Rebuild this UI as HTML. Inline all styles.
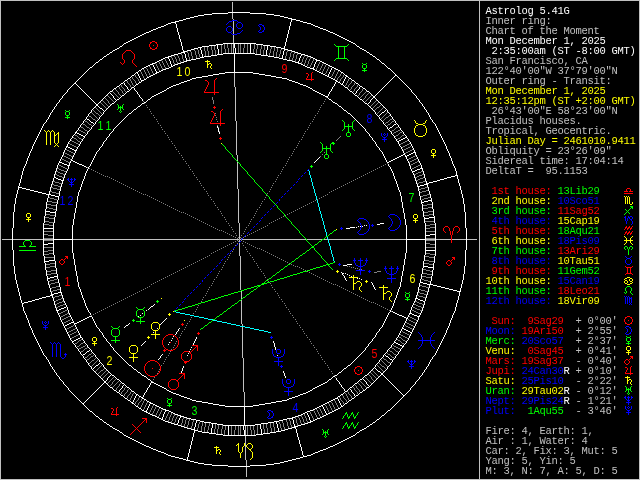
<!DOCTYPE html>
<html lang="en"><head><meta charset="utf-8"><title>Astrolog 5.41G</title>
<style>
html,body{margin:0;padding:0;background:#000;overflow:hidden}
svg{display:block;position:absolute;left:0;top:0}
.sb{font-family:"Liberation Mono","DejaVu Sans Mono",monospace;font-size:10.5px;letter-spacing:-0.3px;white-space:pre}
.hn{font-family:"Liberation Sans","DejaVu Sans",sans-serif;font-size:12.5px;text-anchor:middle;}
</style></head>
<body>
<svg width="640" height="480" viewBox="0 0 640 480" shape-rendering="crispEdges">
<defs><filter id="aa" x="0" y="0" width="100%" height="100%" color-interpolation-filters="sRGB"><feComponentTransfer><feFuncA type="linear" slope="1"/></feComponentTransfer></filter></defs>
<rect width="640" height="480" fill="#000"/>
<path id="border" fill="#c0c0c0" d="M0 0h640v1h-640zM0 1h1v478h-1zM479 1h1v478h-1zM639 1h1v478h-1zM0 479h640v1h-640z"/>
<path id="axis-h" fill="#c0c0c0" d="M2 239h475v1h-475z"/>
<path id="axis-v" fill="#c0c0c0" d="M232 2h1v17h-1zM233 19h1v34h-1zM234 53h1v34h-1zM235 87h1v34h-1zM236 121h1v34h-1zM237 155h1v34h-1zM238 189h1v34h-1zM239 223h1v33h-1zM240 256h1v34h-1zM241 290h1v34h-1zM242 324h1v34h-1zM243 358h1v34h-1zM244 392h1v34h-1zM245 426h1v34h-1zM246 460h1v17h-1z"/>
<path id="ticks1" fill="#808080" d="M224 44h1v5h-1zM227 44h1v4h-1zM231 44h1v9h-1zM238 44h1v9h-1zM240 44h1v9h-1zM244 44h1v4h-1zM247 44h1v9h-1zM254 44h1v5h-1zM214 45h1v5h-1zM221 45h1v9h-1zM257 45h1v4h-1zM261 45h1v4h-1zM264 45h1v5h-1zM207 46h1v5h-1zM211 46h1v4h-1zM271 46h1v3h-1zM204 47h1v4h-1zM274 47h1v4h-1zM197 48h1v2h-1zM228 48h1v5h-1zM243 48h1v5h-1zM277 48h1v4h-1zM281 48h1v2h-1zM194 49h1v2h-1zM225 49h1v5h-1zM253 49h1v5h-1zM256 49h1v5h-1zM260 49h1v5h-1zM270 49h1v4h-1zM190 50h1v2h-1zM198 50h1v4h-1zM212 50h1v5h-1zM215 50h1v5h-1zM263 50h1v5h-1zM280 50h1v4h-1zM287 50h1v2h-1zM187 51h1v2h-1zM195 51h1v4h-1zM205 51h1v5h-1zM208 51h1v5h-1zM273 51h1v5h-1zM291 51h1v2h-1zM191 52h1v4h-1zM276 52h1v5h-1zM286 52h1v4h-1zM294 52h1v2h-1zM181 53h1v2h-1zM188 53h1v4h-1zM269 53h1v3h-1zM290 53h1v4h-1zM297 53h1v2h-1zM177 54h1v2h-1zM199 54h1v3h-1zM279 54h1v3h-1zM293 54h1v4h-1zM174 55h1v2h-1zM182 55h1v4h-1zM196 55h1v3h-1zM296 55h1v4h-1zM304 55h1v2h-1zM171 56h1v2h-1zM178 56h1v2h-1zM192 56h1v3h-1zM285 56h1v3h-1zM307 56h1v2h-1zM175 57h1v2h-1zM189 57h1v3h-1zM289 57h1v3h-1zM303 57h1v2h-1zM310 57h1v2h-1zM172 58h1v2h-1zM179 58h1v3h-1zM292 58h1v3h-1zM306 58h1v2h-1zM165 59h1v2h-1zM176 59h1v3h-1zM183 59h1v3h-1zM295 59h1v3h-1zM302 59h1v3h-1zM309 59h1v2h-1zM313 59h1v2h-1zM161 60h1v1h-1zM173 60h1v3h-1zM305 60h1v3h-1zM158 61h1v1h-1zM162 61h1v2h-1zM166 61h1v2h-1zM180 61h1v2h-1zM308 61h1v3h-1zM312 61h1v2h-1zM320 61h1v1h-1zM159 62h1v2h-1zM177 62h1v2h-1zM301 62h1v2h-1zM319 62h1v2h-1zM155 63h1v1h-1zM163 63h1v2h-1zM167 63h1v2h-1zM174 63h1v2h-1zM304 63h1v2h-1zM311 63h1v2h-1zM323 63h1v1h-1zM156 64h1v2h-1zM160 64h1v2h-1zM307 64h1v2h-1zM318 64h1v2h-1zM322 64h1v2h-1zM326 64h1v1h-1zM164 65h1v2h-1zM168 65h1v2h-1zM310 65h1v2h-1zM325 65h1v2h-1zM149 66h1v1h-1zM157 66h1v2h-1zM161 66h1v2h-1zM317 66h1v2h-1zM321 66h1v2h-1zM329 66h1v1h-1zM150 67h1v2h-1zM165 67h1v2h-1zM324 67h1v2h-1zM328 67h1v2h-1zM146 68h1v1h-1zM158 68h1v2h-1zM162 68h1v2h-1zM316 68h1v2h-1zM320 68h1v2h-1zM143 69h1v1h-1zM147 69h1v2h-1zM151 69h1v2h-1zM323 69h1v2h-1zM327 69h1v2h-1zM335 69h1v1h-1zM144 70h1v2h-1zM159 70h1v1h-1zM319 70h1v1h-1zM334 70h1v2h-1zM140 71h1v1h-1zM148 71h1v2h-1zM152 71h1v2h-1zM322 71h1v2h-1zM326 71h1v2h-1zM338 71h1v1h-1zM141 72h1v2h-1zM145 72h1v2h-1zM333 72h1v2h-1zM337 72h1v2h-1zM149 73h1v2h-1zM153 73h1v1h-1zM325 73h1v1h-1zM341 73h1v1h-1zM134 74h1v1h-1zM142 74h1v2h-1zM146 74h1v2h-1zM332 74h1v2h-1zM336 74h1v2h-1zM340 74h1v2h-1zM344 74h1v1h-1zM135 75h1v2h-1zM150 75h1v1h-1zM343 75h1v2h-1zM131 76h1v1h-1zM143 76h1v2h-1zM147 76h1v1h-1zM331 76h1v1h-1zM335 76h1v2h-1zM339 76h1v1h-1zM132 77h1v2h-1zM136 77h1v1h-1zM338 77h1v1h-1zM342 77h1v1h-1zM129 78h1v1h-1zM137 78h1v1h-1zM144 78h1v1h-1zM334 78h1v1h-1zM337 78h1v2h-1zM341 78h1v1h-1zM349 78h1v1h-1zM130 79h1v2h-1zM133 79h1v1h-1zM138 79h1v2h-1zM340 79h1v2h-1zM348 79h1v2h-1zM126 80h1v1h-1zM134 80h1v1h-1zM336 80h1v1h-1zM352 80h1v1h-1zM127 81h1v2h-1zM131 81h1v2h-1zM135 81h1v2h-1zM139 81h1v1h-1zM339 81h1v1h-1zM347 81h1v2h-1zM351 81h1v2h-1zM355 82h1v1h-1zM128 83h1v1h-1zM132 83h1v2h-1zM136 83h1v1h-1zM346 83h1v2h-1zM350 83h1v1h-1zM354 83h1v2h-1zM120 84h1v1h-1zM129 84h1v1h-1zM349 84h1v1h-1zM358 84h1v1h-1zM121 85h1v2h-1zM130 85h1v2h-1zM133 85h1v1h-1zM345 85h1v1h-1zM348 85h1v2h-1zM353 85h1v1h-1zM357 85h1v2h-1zM118 86h1v1h-1zM352 86h1v1h-1zM119 87h1v2h-1zM122 87h1v1h-1zM131 87h1v1h-1zM347 87h1v1h-1zM351 87h1v2h-1zM356 87h1v1h-1zM123 88h1v1h-1zM355 88h1v1h-1zM363 88h1v1h-1zM115 89h1v1h-1zM120 89h1v1h-1zM124 89h1v2h-1zM350 89h1v1h-1zM354 89h1v2h-1zM362 89h1v2h-1zM116 90h1v1h-1zM121 90h1v1h-1zM112 91h1v1h-1zM117 91h1v1h-1zM122 91h1v2h-1zM125 91h1v1h-1zM353 91h1v1h-1zM361 91h1v1h-1zM366 91h1v1h-1zM113 92h1v1h-1zM118 92h1v2h-1zM360 92h1v1h-1zM365 92h1v1h-1zM114 93h1v1h-1zM123 93h1v1h-1zM359 93h1v2h-1zM364 93h1v1h-1zM368 93h1v1h-1zM115 94h1v1h-1zM119 94h1v1h-1zM363 94h1v1h-1zM367 94h1v1h-1zM107 95h1v1h-1zM116 95h1v1h-1zM120 95h1v1h-1zM358 95h1v1h-1zM362 95h1v1h-1zM366 95h1v1h-1zM371 95h1v1h-1zM108 96h1v1h-1zM117 96h1v1h-1zM361 96h1v1h-1zM365 96h1v2h-1zM370 96h1v1h-1zM109 97h1v1h-1zM118 97h1v1h-1zM360 97h1v1h-1zM369 97h1v1h-1zM105 98h1v1h-1zM110 98h1v1h-1zM364 98h1v1h-1zM368 98h1v1h-1zM106 99h1v1h-1zM111 99h1v1h-1zM363 99h1v1h-1zM367 99h1v1h-1zM102 100h1v1h-1zM107 100h1v1h-1zM112 100h1v1h-1zM366 100h1v1h-1zM376 100h1v1h-1zM103 101h1v1h-1zM108 101h1v2h-1zM113 101h1v1h-1zM365 101h1v1h-1zM375 101h1v1h-1zM100 102h1v1h-1zM104 102h1v1h-1zM374 102h1v1h-1zM378 102h1v1h-1zM101 103h1v1h-1zM105 103h1v1h-1zM109 103h1v1h-1zM373 103h1v1h-1zM377 103h1v1h-1zM102 104h1v1h-1zM106 104h1v1h-1zM110 104h1v1h-1zM372 104h1v1h-1zM376 104h1v1h-1zM103 105h1v1h-1zM107 105h1v1h-1zM371 105h1v1h-1zM375 105h1v1h-1zM380 105h1v1h-1zM104 106h1v1h-1zM108 106h1v1h-1zM370 106h1v1h-1zM374 106h1v1h-1zM379 106h1v1h-1zM95 107h1v1h-1zM105 107h1v1h-1zM373 107h1v1h-1zM377 107h2v1h-2zM383 107h1v1h-1zM96 108h1v1h-1zM106 108h1v1h-1zM372 108h1v1h-1zM376 108h1v1h-1zM382 108h1v1h-1zM97 109h1v1h-1zM375 109h1v1h-1zM381 109h1v1h-1zM93 110h1v1h-1zM98 110h1v1h-1zM374 110h1v1h-1zM380 110h1v1h-1zM94 111h1v1h-1zM99 111h1v1h-1zM379 111h1v1h-1zM91 112h1v1h-1zM95 112h1v1h-1zM100 112h1v1h-1zM378 112h1v1h-1zM387 112h1v1h-1zM92 113h1v1h-1zM96 113h2v1h-2zM101 113h1v1h-1zM377 113h1v1h-1zM386 113h1v1h-1zM93 114h1v1h-1zM98 114h1v1h-1zM385 114h1v1h-1zM88 115h1v1h-1zM94 115h1v1h-1zM99 115h1v1h-1zM384 115h1v1h-1zM389 115h1v1h-1zM89 116h2v1h-2zM95 116h1v1h-1zM383 116h1v1h-1zM388 116h1v1h-1zM91 117h1v1h-1zM96 117h1v1h-1zM382 117h1v1h-1zM386 117h2v1h-2zM92 118h1v1h-1zM97 118h1v1h-1zM381 118h1v1h-1zM385 118h1v1h-1zM392 118h1v1h-1zM93 119h2v1h-2zM384 119h1v1h-1zM390 119h2v1h-2zM84 120h1v1h-1zM95 120h1v1h-1zM383 120h1v1h-1zM389 120h1v1h-1zM394 120h1v1h-1zM85 121h2v1h-2zM388 121h1v1h-1zM392 121h2v1h-2zM87 122h1v1h-1zM386 122h2v1h-2zM391 122h1v1h-1zM82 123h1v1h-1zM88 123h1v1h-1zM385 123h1v1h-1zM390 123h1v1h-1zM83 124h2v1h-2zM89 124h2v1h-2zM388 124h2v1h-2zM85 125h1v1h-1zM91 125h1v1h-1zM387 125h1v1h-1zM80 126h1v1h-1zM86 126h1v1h-1zM398 126h1v1h-1zM81 127h2v1h-2zM87 127h2v1h-2zM396 127h2v1h-2zM83 128h1v1h-1zM89 128h1v1h-1zM395 128h1v1h-1zM78 129h1v1h-1zM84 129h1v1h-1zM394 129h1v1h-1zM400 129h1v1h-1zM79 130h2v1h-2zM85 130h2v1h-2zM392 130h2v1h-2zM398 130h2v1h-2zM81 131h2v1h-2zM87 131h1v1h-1zM391 131h1v1h-1zM396 131h2v1h-2zM402 131h1v1h-1zM83 132h2v1h-2zM394 132h2v1h-2zM400 132h2v1h-2zM85 133h1v1h-1zM393 133h1v1h-1zM399 133h1v1h-1zM74 134h1v1h-1zM398 134h1v1h-1zM404 134h1v1h-1zM75 135h2v1h-2zM396 135h2v1h-2zM402 135h2v1h-2zM77 136h1v1h-1zM395 136h1v1h-1zM401 136h1v1h-1zM73 137h1v1h-1zM78 137h1v1h-1zM400 137h1v1h-1zM74 138h2v1h-2zM79 138h2v1h-2zM398 138h2v1h-2zM76 139h1v1h-1zM81 139h1v1h-1zM397 139h1v1h-1zM71 140h1v1h-1zM77 140h1v1h-1zM407 140h1v1h-1zM72 141h2v1h-2zM78 141h2v1h-2zM405 141h2v1h-2zM74 142h2v1h-2zM80 142h1v1h-1zM403 142h2v1h-2zM69 143h1v1h-1zM76 143h2v1h-2zM401 143h2v1h-2zM409 143h1v1h-1zM70 144h2v1h-2zM78 144h1v1h-1zM400 144h1v1h-1zM407 144h2v1h-2zM72 145h2v1h-2zM405 145h2v1h-2zM74 146h2v1h-2zM403 146h2v1h-2zM410 146h1v1h-1zM76 147h1v1h-1zM402 147h1v1h-1zM408 147h2v1h-2zM406 148h2v1h-2zM66 149h1v1h-1zM404 149h2v1h-2zM412 149h1v1h-1zM67 150h2v1h-2zM403 150h1v1h-1zM410 150h2v1h-2zM69 151h2v1h-2zM408 151h2v1h-2zM64 152h1v1h-1zM71 152h2v1h-2zM406 152h2v1h-2zM65 153h2v1h-2zM73 153h1v1h-1zM405 153h1v1h-1zM67 154h2v1h-2zM63 155h1v1h-1zM69 155h2v1h-2zM415 155h1v1h-1zM64 156h2v1h-2zM71 156h2v1h-2zM413 156h2v1h-2zM66 157h2v1h-2zM411 157h2v1h-2zM61 158h1v1h-1zM68 158h2v1h-2zM409 158h2v1h-2zM416 158h2v1h-2zM62 159h2v1h-2zM70 159h1v1h-1zM408 159h1v1h-1zM414 159h2v1h-2zM64 160h2v1h-2zM412 160h2v1h-2zM66 161h2v1h-2zM410 161h2v1h-2zM417 161h2v1h-2zM68 162h2v1h-2zM409 162h1v1h-1zM415 162h2v1h-2zM413 163h2v1h-2zM411 164h2v1h-2zM59 165h2v1h-2zM410 165h1v1h-1zM418 165h2v1h-2zM61 166h2v1h-2zM416 166h2v1h-2zM63 167h2v1h-2zM414 167h2v1h-2zM57 168h2v1h-2zM65 168h2v1h-2zM412 168h2v1h-2zM59 169h2v1h-2zM61 170h3v1h-3zM56 171h2v1h-2zM64 171h2v1h-2zM421 171h2v1h-2zM58 172h2v1h-2zM418 172h3v1h-3zM60 173h3v1h-3zM416 173h2v1h-2zM55 174h2v1h-2zM63 174h2v1h-2zM414 174h2v1h-2zM422 174h2v1h-2zM57 175h2v1h-2zM419 175h3v1h-3zM59 176h3v1h-3zM417 176h2v1h-2zM62 177h2v1h-2zM415 177h2v1h-2zM423 177h2v1h-2zM420 178h3v1h-3zM418 179h2v1h-2zM416 180h2v1h-2zM53 181h2v1h-2zM423 181h3v1h-3zM55 182h4v1h-4zM419 182h4v1h-4zM59 183h3v1h-3zM417 183h2v1h-2zM52 184h2v1h-2zM54 185h4v1h-4zM58 186h3v1h-3zM51 187h2v1h-2zM425 187h3v1h-3zM53 188h4v1h-4zM421 188h4v1h-4zM57 189h3v1h-3zM419 189h2v1h-2zM426 190h3v1h-3zM50 191h2v1h-2zM422 191h4v1h-4zM52 192h4v1h-4zM420 192h2v1h-2zM56 193h3v1h-3zM427 194h3v1h-3zM423 195h4v1h-4zM421 196h2v1h-2zM48 197h2v1h-2zM428 197h3v1h-3zM50 198h4v1h-4zM424 198h4v1h-4zM54 199h3v1h-3zM422 199h2v1h-2zM48 201h4v1h-4zM52 202h5v1h-5zM47 204h4v1h-4zM427 204h5v1h-5zM51 205h5v1h-5zM423 205h4v1h-4zM46 207h3v1h-3zM428 207h5v1h-5zM49 208h4v1h-4zM423 208h5v1h-5zM53 209h3v1h-3zM428 211h5v1h-5zM424 212h4v1h-4zM45 214h5v1h-5zM429 214h5v1h-5zM50 215h5v1h-5zM424 215h5v1h-5zM45 217h4v1h-4zM49 218h5v1h-5zM45 221h4v1h-4zM425 221h9v1h-9zM49 222h5v1h-5zM44 224h5v1h-5zM430 224h5v1h-5zM49 225h5v1h-5zM425 225h5v1h-5zM430 227h5v1h-5zM426 228h4v1h-4zM44 231h9v1h-9zM426 231h9v1h-9zM44 234h4v1h-4zM48 235h5v1h-5zM44 238h9v1h-9zM426 238h9v1h-9zM44 240h9v1h-9zM426 240h9v1h-9zM426 243h4v1h-4zM430 244h5v1h-5zM44 247h9v1h-9zM426 247h9v1h-9zM48 250h5v1h-5zM44 251h4v1h-4zM49 253h5v1h-5zM425 253h5v1h-5zM44 254h5v1h-5zM430 254h5v1h-5zM425 256h4v1h-4zM45 257h9v1h-9zM429 257h5v1h-5zM425 260h4v1h-4zM429 261h5v1h-5zM50 263h5v1h-5zM424 263h5v1h-5zM45 264h5v1h-5zM429 264h5v1h-5zM50 266h5v1h-5zM46 267h4v1h-4zM423 269h3v1h-3zM51 270h5v1h-5zM426 270h4v1h-4zM46 271h5v1h-5zM430 271h3v1h-3zM51 273h5v1h-5zM423 273h4v1h-4zM47 274h4v1h-4zM427 274h5v1h-5zM422 276h4v1h-4zM426 277h5v1h-5zM54 279h3v1h-3zM422 279h2v1h-2zM50 280h4v1h-4zM424 280h4v1h-4zM48 281h2v1h-2zM428 281h3v1h-3zM55 282h3v1h-3zM51 283h4v1h-4zM49 284h2v1h-2zM420 285h2v1h-2zM56 286h3v1h-3zM422 286h4v1h-4zM52 287h4v1h-4zM426 287h3v1h-3zM50 288h2v1h-2zM57 289h3v1h-3zM419 289h2v1h-2zM53 290h4v1h-4zM421 290h4v1h-4zM51 291h2v1h-2zM425 291h3v1h-3zM418 292h2v1h-2zM420 293h4v1h-4zM424 294h3v1h-3zM59 295h3v1h-3zM417 295h2v1h-2zM55 296h4v1h-4zM419 296h4v1h-4zM53 297h2v1h-2zM423 297h3v1h-3zM61 298h2v1h-2zM58 299h3v1h-3zM56 300h2v1h-2zM54 301h2v1h-2zM62 301h2v1h-2zM415 301h2v1h-2zM59 302h3v1h-3zM417 302h2v1h-2zM57 303h2v1h-2zM419 303h3v1h-3zM55 304h2v1h-2zM63 304h2v1h-2zM414 304h2v1h-2zM422 304h2v1h-2zM60 305h3v1h-3zM416 305h2v1h-2zM58 306h2v1h-2zM418 306h3v1h-3zM56 307h2v1h-2zM413 307h2v1h-2zM421 307h2v1h-2zM415 308h2v1h-2zM417 309h3v1h-3zM65 310h2v1h-2zM412 310h2v1h-2zM420 310h2v1h-2zM63 311h2v1h-2zM414 311h2v1h-2zM61 312h2v1h-2zM416 312h2v1h-2zM59 313h2v1h-2zM67 313h2v1h-2zM418 313h2v1h-2zM65 314h2v1h-2zM63 315h2v1h-2zM61 316h2v1h-2zM68 316h2v1h-2zM409 316h1v1h-1zM60 317h1v1h-1zM66 317h2v1h-2zM410 317h2v1h-2zM64 318h2v1h-2zM412 318h2v1h-2zM62 319h2v1h-2zM70 319h1v1h-1zM408 319h1v1h-1zM414 319h2v1h-2zM61 320h1v1h-1zM68 320h2v1h-2zM409 320h2v1h-2zM416 320h2v1h-2zM66 321h2v1h-2zM411 321h2v1h-2zM64 322h2v1h-2zM406 322h1v1h-1zM413 322h2v1h-2zM63 323h1v1h-1zM407 323h2v1h-2zM415 323h1v1h-1zM409 324h2v1h-2zM73 325h1v1h-1zM405 325h1v1h-1zM411 325h2v1h-2zM71 326h2v1h-2zM406 326h2v1h-2zM413 326h2v1h-2zM69 327h2v1h-2zM408 327h2v1h-2zM67 328h2v1h-2zM75 328h1v1h-1zM410 328h2v1h-2zM66 329h1v1h-1zM73 329h2v1h-2zM412 329h1v1h-1zM71 330h2v1h-2zM69 331h2v1h-2zM76 331h1v1h-1zM402 331h1v1h-1zM68 332h1v1h-1zM74 332h2v1h-2zM403 332h2v1h-2zM72 333h2v1h-2zM405 333h2v1h-2zM70 334h2v1h-2zM78 334h1v1h-1zM400 334h1v1h-1zM407 334h2v1h-2zM69 335h1v1h-1zM76 335h2v1h-2zM401 335h2v1h-2zM409 335h1v1h-1zM74 336h2v1h-2zM398 336h1v1h-1zM403 336h2v1h-2zM72 337h2v1h-2zM399 337h2v1h-2zM405 337h2v1h-2zM71 338h1v1h-1zM401 338h1v1h-1zM407 338h1v1h-1zM81 339h1v1h-1zM397 339h1v1h-1zM402 339h1v1h-1zM79 340h2v1h-2zM398 340h2v1h-2zM403 340h2v1h-2zM78 341h1v1h-1zM400 341h1v1h-1zM405 341h1v1h-1zM77 342h1v1h-1zM83 342h1v1h-1zM401 342h1v1h-1zM75 343h2v1h-2zM81 343h2v1h-2zM402 343h2v1h-2zM74 344h1v1h-1zM80 344h1v1h-1zM404 344h1v1h-1zM79 345h1v1h-1zM85 345h1v1h-1zM393 345h1v1h-1zM77 346h2v1h-2zM83 346h2v1h-2zM394 346h2v1h-2zM76 347h1v1h-1zM81 347h2v1h-2zM87 347h1v1h-1zM391 347h1v1h-1zM396 347h2v1h-2zM79 348h2v1h-2zM85 348h2v1h-2zM392 348h2v1h-2zM398 348h2v1h-2zM78 349h1v1h-1zM84 349h1v1h-1zM394 349h1v1h-1zM400 349h1v1h-1zM83 350h1v1h-1zM389 350h1v1h-1zM395 350h1v1h-1zM81 351h2v1h-2zM390 351h2v1h-2zM396 351h2v1h-2zM80 352h1v1h-1zM392 352h1v1h-1zM398 352h1v1h-1zM91 353h1v1h-1zM387 353h1v1h-1zM393 353h1v1h-1zM89 354h2v1h-2zM388 354h2v1h-2zM394 354h2v1h-2zM88 355h1v1h-1zM93 355h1v1h-1zM390 355h1v1h-1zM396 355h1v1h-1zM87 356h1v1h-1zM91 356h2v1h-2zM391 356h1v1h-1zM85 357h2v1h-2zM90 357h1v1h-1zM392 357h2v1h-2zM84 358h1v1h-1zM89 358h1v1h-1zM95 358h1v1h-1zM383 358h1v1h-1zM394 358h1v1h-1zM87 359h2v1h-2zM94 359h1v1h-1zM384 359h2v1h-2zM86 360h1v1h-1zM92 360h2v1h-2zM97 360h1v1h-1zM381 360h1v1h-1zM386 360h1v1h-1zM91 361h1v1h-1zM96 361h1v1h-1zM382 361h1v1h-1zM387 361h1v1h-1zM90 362h1v1h-1zM95 362h1v1h-1zM383 362h1v1h-1zM388 362h2v1h-2zM89 363h1v1h-1zM94 363h1v1h-1zM379 363h1v1h-1zM384 363h1v1h-1zM390 363h1v1h-1zM93 364h1v1h-1zM380 364h1v1h-1zM385 364h1v1h-1zM92 365h1v1h-1zM101 365h1v1h-1zM377 365h1v1h-1zM381 365h1v1h-1zM386 365h1v1h-1zM91 366h1v1h-1zM100 366h1v1h-1zM378 366h1v1h-1zM382 366h2v1h-2zM387 366h1v1h-1zM99 367h1v1h-1zM379 367h1v1h-1zM384 367h1v1h-1zM98 368h1v1h-1zM104 368h1v1h-1zM380 368h1v1h-1zM385 368h1v1h-1zM97 369h1v1h-1zM103 369h1v1h-1zM381 369h1v1h-1zM96 370h1v1h-1zM101 370h2v1h-2zM106 370h1v1h-1zM372 370h1v1h-1zM382 370h1v1h-1zM95 371h1v1h-1zM100 371h1v1h-1zM105 371h1v1h-1zM373 371h1v1h-1zM383 371h1v1h-1zM99 372h1v1h-1zM104 372h1v1h-1zM108 372h1v1h-1zM370 372h1v1h-1zM374 372h1v1h-1zM98 373h1v1h-1zM103 373h1v1h-1zM107 373h1v1h-1zM371 373h1v1h-1zM375 373h1v1h-1zM102 374h1v1h-1zM106 374h1v1h-1zM368 374h1v1h-1zM372 374h1v1h-1zM376 374h1v1h-1zM101 375h1v1h-1zM105 375h1v1h-1zM369 375h1v1h-1zM373 375h1v1h-1zM377 375h1v1h-1zM100 376h1v1h-1zM104 376h1v1h-1zM370 376h1v1h-1zM374 376h1v1h-1zM378 376h1v1h-1zM103 377h1v1h-1zM113 377h1v1h-1zM365 377h1v1h-1zM371 377h1v2h-1zM375 377h1v1h-1zM102 378h1v1h-1zM112 378h1v1h-1zM366 378h1v1h-1zM376 378h1v1h-1zM111 379h1v1h-1zM115 379h1v1h-1zM367 379h1v1h-1zM372 379h1v1h-1zM110 380h1v1h-1zM114 380h1v1h-1zM368 380h1v1h-1zM373 380h1v1h-1zM109 381h1v1h-1zM113 381h1v1h-1zM118 381h1v1h-1zM360 381h1v1h-1zM369 381h1v1h-1zM108 382h1v1h-1zM112 382h1v2h-1zM117 382h1v1h-1zM361 382h1v1h-1zM370 382h1v1h-1zM107 383h1v1h-1zM116 383h1v1h-1zM120 383h1v1h-1zM358 383h1v1h-1zM362 383h1v1h-1zM371 383h1v1h-1zM111 384h1v1h-1zM115 384h1v1h-1zM119 384h1v2h-1zM359 384h1v1h-1zM363 384h1v1h-1zM110 385h1v1h-1zM114 385h1v1h-1zM355 385h1v1h-1zM360 385h1v1h-1zM364 385h1v1h-1zM113 386h1v1h-1zM118 386h1v1h-1zM356 386h1v2h-1zM361 386h1v2h-1zM365 386h1v1h-1zM112 387h1v1h-1zM117 387h1v1h-1zM125 387h1v1h-1zM353 387h1v1h-1zM366 387h1v1h-1zM116 388h1v2h-1zM124 388h1v2h-1zM354 388h1v2h-1zM357 388h1v1h-1zM362 388h1v1h-1zM128 389h1v1h-1zM358 389h1v1h-1zM363 389h1v1h-1zM115 390h1v1h-1zM123 390h1v1h-1zM127 390h1v2h-1zM355 390h1v1h-1zM359 390h1v2h-1zM122 391h1v1h-1zM131 391h1v1h-1zM347 391h1v1h-1zM356 391h1v1h-1zM121 392h1v2h-1zM126 392h1v1h-1zM130 392h1v2h-1zM348 392h1v2h-1zM357 392h1v2h-1zM360 392h1v1h-1zM125 393h1v1h-1zM133 393h1v1h-1zM345 393h1v1h-1zM120 394h1v1h-1zM124 394h1v2h-1zM129 394h1v1h-1zM132 394h1v2h-1zM346 394h1v2h-1zM349 394h1v1h-1zM358 394h1v1h-1zM128 395h1v1h-1zM342 395h1v1h-1zM350 395h1v1h-1zM123 396h1v1h-1zM127 396h1v2h-1zM131 396h1v2h-1zM343 396h1v2h-1zM347 396h1v2h-1zM351 396h1v2h-1zM139 397h1v1h-1zM339 397h1v1h-1zM126 398h1v1h-1zM130 398h1v2h-1zM138 398h1v2h-1zM142 398h1v1h-1zM340 398h1v2h-1zM344 398h1v1h-1zM348 398h1v2h-1zM352 398h1v1h-1zM141 399h1v2h-1zM345 399h1v1h-1zM129 400h1v1h-1zM137 400h1v1h-1zM144 400h1v1h-1zM334 400h1v1h-1zM341 400h1v1h-1zM346 400h1v2h-1zM349 400h1v1h-1zM136 401h1v1h-1zM140 401h1v1h-1zM143 401h1v2h-1zM335 401h1v2h-1zM342 401h1v1h-1zM135 402h1v2h-1zM139 402h1v1h-1zM147 402h1v1h-1zM331 402h1v1h-1zM343 402h1v2h-1zM347 402h1v1h-1zM138 403h1v2h-1zM142 403h1v2h-1zM146 403h1v2h-1zM328 403h1v1h-1zM332 403h1v2h-1zM336 403h1v2h-1zM134 404h1v1h-1zM329 404h1v2h-1zM344 404h1v1h-1zM137 405h1v1h-1zM141 405h1v2h-1zM145 405h1v2h-1zM153 405h1v1h-1zM325 405h1v1h-1zM333 405h1v2h-1zM337 405h1v2h-1zM152 406h1v2h-1zM156 406h1v1h-1zM326 406h1v2h-1zM330 406h1v2h-1zM140 407h1v1h-1zM144 407h1v2h-1zM155 407h1v2h-1zM334 407h1v2h-1zM338 407h1v1h-1zM151 408h1v2h-1zM159 408h1v1h-1zM319 408h1v1h-1zM327 408h1v2h-1zM331 408h1v2h-1zM143 409h1v1h-1zM154 409h1v2h-1zM158 409h1v2h-1zM162 409h1v1h-1zM316 409h1v1h-1zM320 409h1v2h-1zM335 409h1v1h-1zM150 410h1v2h-1zM161 410h1v2h-1zM313 410h1v1h-1zM317 410h1v2h-1zM328 410h1v2h-1zM332 410h1v1h-1zM153 411h1v2h-1zM157 411h1v2h-1zM314 411h1v2h-1zM321 411h1v2h-1zM149 412h1v1h-1zM160 412h1v2h-1zM168 412h1v2h-1zM310 412h1v2h-1zM318 412h1v2h-1zM329 412h1v1h-1zM152 413h1v2h-1zM156 413h1v2h-1zM171 413h1v2h-1zM315 413h1v2h-1zM322 413h1v2h-1zM159 414h1v2h-1zM167 414h1v2h-1zM174 414h1v2h-1zM304 414h1v2h-1zM311 414h1v2h-1zM319 414h1v2h-1zM155 415h1v1h-1zM170 415h1v2h-1zM177 415h1v2h-1zM301 415h1v2h-1zM316 415h1v2h-1zM323 415h1v1h-1zM158 416h1v2h-1zM166 416h1v2h-1zM173 416h1v2h-1zM298 416h1v2h-1zM305 416h1v2h-1zM312 416h1v2h-1zM320 416h1v2h-1zM169 417h1v3h-1zM176 417h1v2h-1zM183 417h1v2h-1zM295 417h1v2h-1zM302 417h1v2h-1zM317 417h1v2h-1zM165 418h1v2h-1zM172 418h1v3h-1zM186 418h1v2h-1zM299 418h1v2h-1zM306 418h1v3h-1zM313 418h1v2h-1zM175 419h1v3h-1zM182 419h1v4h-1zM189 419h1v2h-1zM289 419h1v2h-1zM296 419h1v4h-1zM303 419h1v3h-1zM168 420h1v2h-1zM185 420h1v4h-1zM193 420h1v2h-1zM286 420h1v2h-1zM300 420h1v3h-1zM171 421h1v2h-1zM188 421h1v4h-1zM282 421h1v2h-1zM290 421h1v4h-1zM307 421h1v2h-1zM174 422h1v2h-1zM192 422h1v4h-1zM199 422h1v2h-1zM202 422h1v4h-1zM279 422h1v2h-1zM287 422h1v4h-1zM304 422h1v2h-1zM181 423h1v3h-1zM205 423h1v4h-1zM209 423h1v3h-1zM270 423h1v5h-1zM273 423h1v4h-1zM283 423h1v4h-1zM297 423h1v3h-1zM301 423h1v2h-1zM184 424h1v3h-1zM198 424h1v4h-1zM215 424h1v5h-1zM263 424h1v5h-1zM266 424h1v4h-1zM280 424h1v4h-1zM187 425h1v3h-1zM218 425h1v4h-1zM222 425h1v4h-1zM225 425h1v5h-1zM253 425h1v5h-1zM257 425h1v9h-1zM291 425h1v3h-1zM191 426h1v3h-1zM201 426h1v5h-1zM208 426h1v4h-1zM231 426h1v9h-1zM235 426h1v4h-1zM238 426h1v9h-1zM240 426h1v9h-1zM247 426h1v9h-1zM250 426h1v4h-1zM288 426h1v3h-1zM204 427h1v5h-1zM274 427h1v5h-1zM284 427h1v3h-1zM197 428h1v3h-1zM267 428h1v5h-1zM271 428h1v5h-1zM281 428h1v3h-1zM214 429h1v5h-1zM217 429h1v5h-1zM221 429h1v5h-1zM264 429h1v5h-1zM207 430h1v3h-1zM224 430h1v5h-1zM234 430h1v5h-1zM251 430h1v5h-1zM254 430h1v5h-1z"/>
<path id="ticks5" fill="#fff" d="M234 44h1v4h-1zM250 44h1v9h-1zM217 45h1v4h-1zM267 46h1v4h-1zM200 48h1v2h-1zM235 48h1v5h-1zM218 49h1v5h-1zM284 49h1v2h-1zM201 50h1v4h-1zM266 50h1v5h-1zM283 51h1v4h-1zM184 52h1v2h-1zM185 54h1v4h-1zM202 54h1v3h-1zM301 54h1v2h-1zM282 55h1v3h-1zM300 56h1v2h-1zM168 57h1v2h-1zM186 58h1v3h-1zM299 58h1v3h-1zM169 59h1v2h-1zM316 60h1v2h-1zM170 61h1v3h-1zM298 61h1v2h-1zM315 62h1v2h-1zM152 64h1v1h-1zM171 64h1v2h-1zM314 64h1v3h-1zM153 65h1v2h-1zM154 67h1v2h-1zM313 67h1v2h-1zM332 67h1v1h-1zM331 68h1v2h-1zM155 69h1v2h-1zM330 70h1v2h-1zM156 71h1v2h-1zM329 72h1v2h-1zM137 73h1v1h-1zM138 74h1v2h-1zM328 74h1v2h-1zM139 76h1v2h-1zM346 76h1v1h-1zM345 77h1v2h-1zM140 78h1v2h-1zM344 79h1v2h-1zM141 80h1v1h-1zM343 81h1v2h-1zM123 82h1v1h-1zM124 83h1v2h-1zM342 83h1v1h-1zM125 85h1v1h-1zM126 86h1v1h-1zM360 86h1v1h-1zM127 87h1v2h-1zM359 87h1v2h-1zM128 89h1v1h-1zM358 89h1v1h-1zM357 90h1v1h-1zM356 91h1v2h-1zM110 93h1v1h-1zM355 93h1v1h-1zM111 94h1v1h-1zM112 95h1v1h-1zM113 96h1v2h-1zM373 97h1v1h-1zM114 98h1v1h-1zM372 98h1v1h-1zM115 99h1v1h-1zM371 99h1v1h-1zM370 100h1v2h-1zM369 102h1v1h-1zM368 103h1v1h-1zM97 105h1v1h-1zM98 106h1v1h-1zM99 107h1v1h-1zM100 108h2v1h-2zM102 109h1v1h-1zM103 110h1v1h-1zM385 110h1v1h-1zM384 111h1v1h-1zM382 112h2v1h-2zM381 113h1v1h-1zM380 114h1v1h-1zM379 115h1v1h-1zM86 118h1v1h-1zM87 119h2v1h-2zM89 120h1v1h-1zM90 121h1v1h-1zM91 122h2v1h-2zM93 123h1v1h-1zM396 123h1v1h-1zM394 124h2v1h-2zM393 125h1v1h-1zM392 126h1v1h-1zM390 127h2v1h-2zM389 128h1v1h-1zM76 132h1v1h-1zM77 133h2v1h-2zM79 134h2v1h-2zM81 135h2v1h-2zM83 136h1v1h-1zM405 137h1v1h-1zM403 138h2v1h-2zM401 139h2v1h-2zM399 140h2v1h-2zM398 141h1v1h-1zM67 146h1v1h-1zM68 147h2v1h-2zM70 148h2v1h-2zM72 149h2v1h-2zM74 150h2v1h-2zM413 152h2v1h-2zM411 153h2v1h-2zM409 154h2v1h-2zM407 155h2v1h-2zM406 156h1v1h-1zM60 162h2v1h-2zM62 163h2v1h-2zM64 164h3v1h-3zM67 165h2v1h-2zM420 168h2v1h-2zM417 169h3v1h-3zM415 170h2v1h-2zM413 171h2v1h-2zM54 177h2v1h-2zM56 178h2v1h-2zM58 179h3v1h-3zM61 180h2v1h-2zM424 184h3v1h-3zM420 185h4v1h-4zM418 186h2v1h-2zM49 194h2v1h-2zM51 195h4v1h-4zM55 196h3v1h-3zM428 200h3v1h-3zM424 201h4v1h-4zM422 202h2v1h-2zM46 211h4v1h-4zM50 212h5v1h-5zM429 217h5v1h-5zM425 218h4v1h-4zM44 228h9v1h-9zM430 234h5v1h-5zM426 235h4v1h-4zM48 243h5v1h-5zM44 244h4v1h-4zM426 250h9v1h-9zM49 260h5v1h-5zM45 261h4v1h-4zM424 266h4v1h-4zM428 267h5v1h-5zM54 276h3v1h-3zM50 277h4v1h-4zM48 278h2v1h-2zM421 282h2v1h-2zM423 283h4v1h-4zM427 284h3v1h-3zM58 292h3v1h-3zM54 293h4v1h-4zM52 294h2v1h-2zM416 298h2v1h-2zM418 299h2v1h-2zM420 300h3v1h-3zM423 301h2v1h-2zM64 307h2v1h-2zM61 308h3v1h-3zM59 309h2v1h-2zM57 310h2v1h-2zM410 313h2v1h-2zM412 314h2v1h-2zM414 315h3v1h-3zM417 316h2v1h-2zM71 322h2v1h-2zM69 323h2v1h-2zM67 324h2v1h-2zM65 325h2v1h-2zM64 326h1v1h-1zM403 328h1v1h-1zM404 329h2v1h-2zM406 330h2v1h-2zM408 331h2v1h-2zM410 332h2v1h-2zM80 337h1v1h-1zM78 338h2v1h-2zM76 339h2v1h-2zM74 340h2v1h-2zM73 341h1v1h-1zM395 342h1v1h-1zM396 343h2v1h-2zM398 344h2v1h-2zM400 345h2v1h-2zM402 346h1v1h-1zM89 350h1v1h-1zM87 351h2v1h-2zM86 352h1v1h-1zM85 353h1v1h-1zM83 354h2v1h-2zM82 355h1v1h-1zM385 355h1v1h-1zM386 356h2v1h-2zM388 357h1v1h-1zM389 358h1v1h-1zM390 359h2v1h-2zM392 360h1v1h-1zM99 363h1v1h-1zM98 364h1v1h-1zM96 365h2v1h-2zM95 366h1v1h-1zM94 367h1v1h-1zM93 368h1v1h-1zM375 368h1v1h-1zM376 369h1v1h-1zM377 370h1v1h-1zM378 371h2v1h-2zM380 372h1v1h-1zM381 373h1v1h-1zM110 375h1v1h-1zM109 376h1v1h-1zM108 377h1v1h-1zM107 378h1v2h-1zM363 379h1v1h-1zM106 380h1v1h-1zM364 380h1v1h-1zM105 381h1v1h-1zM365 381h1v1h-1zM366 382h1v2h-1zM367 384h1v1h-1zM123 385h1v1h-1zM368 385h1v1h-1zM122 386h1v2h-1zM121 388h1v1h-1zM120 389h1v1h-1zM350 389h1v1h-1zM119 390h1v2h-1zM351 390h1v2h-1zM118 392h1v1h-1zM352 392h1v1h-1zM353 393h1v1h-1zM354 394h1v2h-1zM136 395h1v1h-1zM135 396h1v2h-1zM355 396h1v1h-1zM134 398h1v2h-1zM337 398h1v1h-1zM338 399h1v2h-1zM133 400h1v2h-1zM339 401h1v2h-1zM132 402h1v1h-1zM150 403h1v1h-1zM340 403h1v2h-1zM149 404h1v2h-1zM341 405h1v1h-1zM148 406h1v2h-1zM322 406h1v1h-1zM323 407h1v2h-1zM147 408h1v2h-1zM324 409h1v2h-1zM146 410h1v2h-1zM165 410h1v2h-1zM325 411h1v2h-1zM164 412h1v2h-1zM307 413h1v2h-1zM326 413h1v2h-1zM163 414h1v3h-1zM308 415h1v2h-1zM180 416h1v2h-1zM162 417h1v2h-1zM309 417h1v3h-1zM179 418h1v2h-1zM292 418h1v2h-1zM178 420h1v3h-1zM293 420h1v4h-1zM310 420h1v2h-1zM196 421h1v2h-1zM276 422h1v2h-1zM177 423h1v2h-1zM195 423h1v4h-1zM212 424h1v4h-1zM277 424h1v4h-1zM294 424h1v3h-1zM260 425h1v4h-1zM228 426h1v9h-1zM243 426h1v4h-1zM194 427h1v3h-1zM211 428h1v5h-1zM278 428h1v3h-1zM261 429h1v5h-1zM244 430h1v5h-1z"/>
<path id="circle95" fill="#fff" d="M228 12h22v1h-22zM212 13h16v1h-16zM250 13h16v1h-16zM204 14h8v1h-8zM266 14h8v1h-8zM198 15h6v1h-6zM274 15h6v1h-6zM194 16h4v1h-4zM280 16h4v1h-4zM190 17h4v1h-4zM284 17h4v1h-4zM186 18h4v1h-4zM288 18h4v1h-4zM183 19h3v1h-3zM292 19h4v1h-4zM179 20h4v1h-4zM296 20h4v1h-4zM175 21h4v1h-4zM300 21h3v1h-3zM171 22h4v1h-4zM303 22h4v1h-4zM168 23h3v1h-3zM307 23h4v1h-4zM166 24h2v1h-2zM311 24h2v1h-2zM164 25h2v1h-2zM313 25h2v1h-2zM161 26h3v1h-3zM315 26h3v1h-3zM158 27h3v1h-3zM318 27h2v1h-2zM156 28h2v1h-2zM320 28h3v1h-3zM153 29h3v1h-3zM323 29h3v1h-3zM151 30h2v1h-2zM326 30h2v1h-2zM149 31h2v1h-2zM328 31h2v1h-2zM146 32h3v1h-3zM330 32h3v1h-3zM144 33h2v1h-2zM333 33h2v1h-2zM142 34h2v1h-2zM335 34h2v1h-2zM140 35h2v1h-2zM337 35h2v1h-2zM138 36h2v1h-2zM339 36h2v1h-2zM136 37h2v1h-2zM341 37h2v1h-2zM134 38h2v1h-2zM343 38h2v1h-2zM132 39h2v1h-2zM345 39h2v1h-2zM130 40h2v1h-2zM347 40h2v1h-2zM128 41h2v1h-2zM349 41h2v1h-2zM126 42h2v1h-2zM351 42h2v1h-2zM124 43h2v1h-2zM353 43h2v1h-2zM123 44h1v1h-1zM355 44h1v1h-1zM122 45h1v1h-1zM356 45h1v1h-1zM120 46h2v1h-2zM357 46h2v1h-2zM119 47h1v1h-1zM359 47h1v1h-1zM117 48h2v1h-2zM360 48h2v1h-2zM115 49h2v1h-2zM362 49h2v1h-2zM113 50h2v1h-2zM364 50h2v1h-2zM112 51h1v1h-1zM366 51h1v1h-1zM110 52h2v1h-2zM367 52h2v1h-2zM109 53h1v1h-1zM369 53h1v1h-1zM107 54h2v1h-2zM370 54h2v1h-2zM106 55h1v1h-1zM372 55h1v1h-1zM104 56h2v1h-2zM373 56h2v1h-2zM103 57h1v1h-1zM375 57h1v1h-1zM102 58h1v1h-1zM376 58h1v1h-1zM100 59h2v1h-2zM377 59h2v1h-2zM99 60h1v1h-1zM379 60h1v1h-1zM98 61h1v1h-1zM380 61h1v1h-1zM96 62h2v1h-2zM381 62h1v1h-1zM95 63h1v1h-1zM382 63h2v1h-2zM94 64h1v1h-1zM384 64h1v1h-1zM93 65h1v1h-1zM385 65h1v1h-1zM92 66h1v1h-1zM386 66h1v1h-1zM90 67h2v1h-2zM387 67h1v1h-1zM89 68h1v1h-1zM388 68h2v1h-2zM88 69h1v1h-1zM390 69h1v1h-1zM87 70h1v1h-1zM391 70h1v1h-1zM86 71h1v1h-1zM392 71h1v1h-1zM85 72h1v1h-1zM393 72h1v1h-1zM84 73h1v1h-1zM394 73h1v1h-1zM83 74h1v1h-1zM395 74h1v1h-1zM82 75h1v1h-1zM396 75h1v1h-1zM81 76h1v1h-1zM397 76h1v1h-1zM80 77h1v1h-1zM398 77h1v1h-1zM79 78h1v1h-1zM399 78h1v1h-1zM78 79h1v1h-1zM400 79h1v1h-1zM77 80h1v1h-1zM401 80h1v1h-1zM76 81h1v1h-1zM402 81h1v1h-1zM75 82h1v1h-1zM403 82h1v1h-1zM74 83h1v1h-1zM404 83h1v1h-1zM73 84h1v1h-1zM405 84h1v1h-1zM72 85h1v1h-1zM406 85h1v1h-1zM71 86h1v1h-1zM407 86h1v1h-1zM70 87h1v1h-1zM408 87h1v1h-1zM69 88h1v1h-1zM409 88h1v1h-1zM68 89h1v1h-1zM410 89h1v1h-1zM67 90h1v2h-1zM411 90h1v2h-1zM66 92h1v1h-1zM412 92h1v1h-1zM65 93h1v1h-1zM413 93h1v1h-1zM64 94h1v1h-1zM414 94h1v1h-1zM63 95h1v1h-1zM415 95h1v1h-1zM62 96h1v2h-1zM416 96h1v2h-1zM61 98h1v1h-1zM417 98h1v1h-1zM60 99h1v1h-1zM418 99h1v1h-1zM59 100h1v2h-1zM419 100h1v2h-1zM58 102h1v1h-1zM420 102h1v1h-1zM57 103h1v1h-1zM421 103h1v1h-1zM56 104h1v2h-1zM422 104h1v2h-1zM55 106h1v1h-1zM423 106h1v1h-1zM54 107h1v2h-1zM424 107h1v2h-1zM53 109h1v1h-1zM425 109h1v1h-1zM52 110h1v2h-1zM426 110h1v2h-1zM51 112h1v1h-1zM427 112h1v1h-1zM50 113h1v2h-1zM428 113h1v2h-1zM49 115h1v2h-1zM429 115h1v2h-1zM48 117h1v2h-1zM430 117h1v2h-1zM47 119h1v1h-1zM431 119h1v1h-1zM46 120h1v2h-1zM432 120h1v2h-1zM45 122h1v1h-1zM433 122h1v1h-1zM44 123h1v1h-1zM434 123h1v1h-1zM43 124h1v2h-1zM435 124h1v2h-1zM42 126h1v2h-1zM436 126h1v2h-1zM41 128h1v2h-1zM437 128h1v2h-1zM40 130h1v2h-1zM438 130h1v2h-1zM39 132h1v2h-1zM439 132h1v2h-1zM38 134h1v2h-1zM440 134h1v2h-1zM37 136h1v2h-1zM441 136h1v2h-1zM36 138h1v2h-1zM442 138h1v2h-1zM35 140h1v2h-1zM443 140h1v2h-1zM34 142h1v2h-1zM444 142h1v2h-1zM33 144h1v2h-1zM445 144h1v2h-1zM32 146h1v3h-1zM446 146h1v3h-1zM31 149h1v2h-1zM447 149h1v2h-1zM30 151h1v2h-1zM448 151h1v2h-1zM29 153h1v3h-1zM449 153h1v3h-1zM28 156h1v2h-1zM450 156h1v2h-1zM27 158h1v3h-1zM451 158h1v3h-1zM26 161h1v3h-1zM452 161h1v3h-1zM25 164h1v2h-1zM453 164h1v2h-1zM24 166h1v2h-1zM454 166h1v2h-1zM23 168h1v3h-1zM455 168h1v3h-1zM22 171h1v4h-1zM456 171h1v4h-1zM21 175h1v4h-1zM457 175h1v4h-1zM20 179h1v4h-1zM458 179h1v4h-1zM19 183h1v3h-1zM459 183h1v3h-1zM18 186h1v4h-1zM460 186h1v4h-1zM17 190h1v4h-1zM461 190h1v4h-1zM16 194h1v4h-1zM462 194h1v4h-1zM15 198h1v6h-1zM463 198h1v6h-1zM14 204h1v8h-1zM464 204h1v8h-1zM13 212h1v16h-1zM465 212h1v16h-1zM12 228h1v22h-1zM466 228h1v22h-1zM13 250h1v16h-1zM465 250h1v16h-1zM14 266h1v8h-1zM464 266h1v8h-1zM15 274h1v6h-1zM463 274h1v6h-1zM16 280h1v4h-1zM462 280h1v4h-1zM17 284h1v4h-1zM461 284h1v4h-1zM18 288h1v4h-1zM460 288h1v4h-1zM19 292h1v4h-1zM459 292h1v4h-1zM20 296h1v4h-1zM458 296h1v4h-1zM21 300h1v3h-1zM457 300h1v3h-1zM22 303h1v4h-1zM456 303h1v4h-1zM23 307h1v4h-1zM455 307h1v4h-1zM24 311h1v2h-1zM454 311h1v2h-1zM25 313h1v2h-1zM453 313h1v2h-1zM26 315h1v3h-1zM452 315h1v3h-1zM27 318h1v2h-1zM451 318h1v2h-1zM28 320h1v3h-1zM450 320h1v3h-1zM29 323h1v3h-1zM449 323h1v3h-1zM30 326h1v2h-1zM448 326h1v2h-1zM31 328h1v2h-1zM447 328h1v2h-1zM32 330h1v3h-1zM446 330h1v3h-1zM33 333h1v2h-1zM445 333h1v2h-1zM34 335h1v2h-1zM444 335h1v2h-1zM35 337h1v2h-1zM443 337h1v2h-1zM36 339h1v2h-1zM442 339h1v2h-1zM37 341h1v2h-1zM441 341h1v2h-1zM38 343h1v2h-1zM440 343h1v2h-1zM39 345h1v2h-1zM439 345h1v2h-1zM40 347h1v2h-1zM438 347h1v2h-1zM41 349h1v2h-1zM437 349h1v2h-1zM42 351h1v2h-1zM436 351h1v2h-1zM43 353h1v2h-1zM435 353h1v2h-1zM44 355h1v1h-1zM434 355h1v1h-1zM45 356h1v1h-1zM433 356h1v1h-1zM46 357h1v2h-1zM432 357h1v2h-1zM47 359h1v1h-1zM431 359h1v1h-1zM48 360h1v2h-1zM430 360h1v2h-1zM49 362h1v2h-1zM429 362h1v2h-1zM50 364h1v2h-1zM428 364h1v2h-1zM51 366h1v1h-1zM427 366h1v1h-1zM52 367h1v2h-1zM426 367h1v2h-1zM53 369h1v1h-1zM425 369h1v1h-1zM54 370h1v2h-1zM424 370h1v2h-1zM55 372h1v1h-1zM423 372h1v1h-1zM56 373h1v2h-1zM422 373h1v2h-1zM57 375h1v1h-1zM421 375h1v1h-1zM58 376h1v1h-1zM420 376h1v1h-1zM59 377h1v2h-1zM419 377h1v2h-1zM60 379h1v1h-1zM418 379h1v1h-1zM61 380h1v1h-1zM417 380h1v1h-1zM62 381h1v1h-1zM416 381h1v1h-1zM63 382h1v2h-1zM415 382h1v2h-1zM64 384h1v1h-1zM414 384h1v1h-1zM65 385h1v1h-1zM413 385h1v1h-1zM66 386h1v1h-1zM412 386h1v1h-1zM67 387h1v1h-1zM411 387h1v1h-1zM68 388h1v2h-1zM410 388h1v2h-1zM69 390h1v1h-1zM409 390h1v1h-1zM70 391h1v1h-1zM408 391h1v1h-1zM71 392h1v1h-1zM407 392h1v1h-1zM72 393h1v1h-1zM406 393h1v1h-1zM73 394h1v1h-1zM405 394h1v1h-1zM74 395h1v1h-1zM404 395h1v1h-1zM75 396h1v1h-1zM403 396h1v1h-1zM76 397h1v1h-1zM402 397h1v1h-1zM77 398h1v1h-1zM401 398h1v1h-1zM78 399h1v1h-1zM400 399h1v1h-1zM79 400h1v1h-1zM399 400h1v1h-1zM80 401h1v1h-1zM398 401h1v1h-1zM81 402h1v1h-1zM397 402h1v1h-1zM82 403h1v1h-1zM396 403h1v1h-1zM83 404h1v1h-1zM395 404h1v1h-1zM84 405h1v1h-1zM394 405h1v1h-1zM85 406h1v1h-1zM393 406h1v1h-1zM86 407h1v1h-1zM392 407h1v1h-1zM87 408h1v1h-1zM391 408h1v1h-1zM88 409h1v1h-1zM390 409h1v1h-1zM89 410h1v1h-1zM388 410h2v1h-2zM90 411h2v1h-2zM387 411h1v1h-1zM92 412h1v1h-1zM386 412h1v1h-1zM93 413h1v1h-1zM385 413h1v1h-1zM94 414h1v1h-1zM384 414h1v1h-1zM95 415h1v1h-1zM382 415h2v1h-2zM96 416h2v1h-2zM381 416h1v1h-1zM98 417h1v1h-1zM380 417h1v1h-1zM99 418h1v1h-1zM379 418h1v1h-1zM100 419h2v1h-2zM377 419h2v1h-2zM102 420h1v1h-1zM376 420h1v1h-1zM103 421h1v1h-1zM375 421h1v1h-1zM104 422h2v1h-2zM373 422h2v1h-2zM106 423h1v1h-1zM372 423h1v1h-1zM107 424h2v1h-2zM370 424h2v1h-2zM109 425h1v1h-1zM369 425h1v1h-1zM110 426h2v1h-2zM367 426h2v1h-2zM112 427h1v1h-1zM366 427h1v1h-1zM113 428h2v1h-2zM364 428h2v1h-2zM115 429h2v1h-2zM362 429h2v1h-2zM117 430h2v1h-2zM360 430h2v1h-2zM119 431h1v1h-1zM359 431h1v1h-1zM120 432h2v1h-2zM357 432h2v1h-2zM122 433h1v1h-1zM356 433h1v1h-1zM123 434h1v1h-1zM355 434h1v1h-1zM124 435h2v1h-2zM353 435h2v1h-2zM126 436h2v1h-2zM351 436h2v1h-2zM128 437h2v1h-2zM349 437h2v1h-2zM130 438h2v1h-2zM347 438h2v1h-2zM132 439h2v1h-2zM345 439h2v1h-2zM134 440h2v1h-2zM343 440h2v1h-2zM136 441h2v1h-2zM341 441h2v1h-2zM138 442h2v1h-2zM339 442h2v1h-2zM140 443h2v1h-2zM337 443h2v1h-2zM142 444h2v1h-2zM335 444h2v1h-2zM144 445h2v1h-2zM333 445h2v1h-2zM146 446h3v1h-3zM330 446h3v1h-3zM149 447h2v1h-2zM328 447h2v1h-2zM151 448h2v1h-2zM326 448h2v1h-2zM153 449h3v1h-3zM323 449h3v1h-3zM156 450h2v1h-2zM320 450h3v1h-3zM158 451h3v1h-3zM318 451h2v1h-2zM161 452h3v1h-3zM315 452h3v1h-3zM164 453h2v1h-2zM313 453h2v1h-2zM166 454h2v1h-2zM311 454h2v1h-2zM168 455h3v1h-3zM307 455h4v1h-4zM171 456h4v1h-4zM303 456h4v1h-4zM175 457h4v1h-4zM300 457h3v1h-3zM179 458h4v1h-4zM296 458h4v1h-4zM183 459h3v1h-3zM292 459h4v1h-4zM186 460h4v1h-4zM288 460h4v1h-4zM190 461h4v1h-4zM284 461h4v1h-4zM194 462h4v1h-4zM280 462h4v1h-4zM198 463h6v1h-6zM274 463h6v1h-6zM204 464h8v1h-8zM266 464h8v1h-8zM212 465h16v1h-16zM250 465h16v1h-16zM228 466h22v1h-22z"/>
<path id="circle82" fill="#fff" d="M223 43h33v1h-33zM216 44h7v1h-7zM256 44h7v1h-7zM209 45h7v1h-7zM263 45h7v1h-7zM202 46h7v1h-7zM270 46h6v1h-6zM198 47h4v1h-4zM276 47h5v1h-5zM194 48h4v1h-4zM281 48h4v1h-4zM191 49h3v1h-3zM285 49h3v1h-3zM187 50h4v1h-4zM288 50h4v1h-4zM184 51h3v1h-3zM292 51h3v1h-3zM181 52h3v1h-3zM295 52h3v1h-3zM178 53h3v1h-3zM298 53h3v1h-3zM174 54h4v1h-4zM301 54h4v1h-4zM171 55h3v1h-3zM305 55h3v1h-3zM168 56h3v1h-3zM308 56h3v1h-3zM165 57h3v1h-3zM311 57h2v1h-2zM163 58h2v1h-2zM313 58h2v1h-2zM161 59h2v1h-2zM315 59h2v1h-2zM159 60h2v1h-2zM317 60h3v1h-3zM157 61h2v1h-2zM320 61h2v1h-2zM155 62h2v1h-2zM322 62h2v1h-2zM152 63h3v1h-3zM324 63h2v1h-2zM150 64h2v1h-2zM326 64h2v1h-2zM148 65h2v1h-2zM328 65h2v1h-2zM146 66h2v1h-2zM330 66h2v1h-2zM144 67h2v1h-2zM332 67h2v1h-2zM142 68h2v1h-2zM334 68h2v1h-2zM141 69h1v1h-1zM336 69h2v1h-2zM139 70h2v1h-2zM338 70h2v1h-2zM138 71h1v1h-1zM340 71h1v1h-1zM136 72h2v1h-2zM341 72h2v1h-2zM135 73h1v1h-1zM343 73h1v1h-1zM134 74h1v1h-1zM344 74h1v1h-1zM132 75h2v1h-2zM345 75h2v1h-2zM131 76h1v1h-1zM347 76h1v1h-1zM130 77h1v1h-1zM348 77h1v1h-1zM128 78h2v1h-2zM349 78h2v1h-2zM127 79h1v1h-1zM351 79h1v1h-1zM125 80h2v1h-2zM352 80h2v1h-2zM124 81h1v1h-1zM354 81h1v1h-1zM123 82h1v1h-1zM355 82h1v1h-1zM121 83h2v1h-2zM356 83h2v1h-2zM120 84h1v1h-1zM358 84h1v1h-1zM119 85h1v1h-1zM359 85h1v1h-1zM117 86h2v1h-2zM360 86h2v1h-2zM116 87h1v1h-1zM362 87h1v1h-1zM114 88h2v1h-2zM363 88h2v1h-2zM113 89h1v1h-1zM365 89h1v1h-1zM112 90h1v1h-1zM366 90h1v1h-1zM110 91h2v1h-2zM367 91h2v1h-2zM109 92h1v1h-1zM369 92h1v1h-1zM108 93h1v1h-1zM370 93h1v1h-1zM107 94h1v1h-1zM371 94h1v1h-1zM106 95h1v1h-1zM372 95h1v1h-1zM105 96h1v1h-1zM373 96h1v1h-1zM104 97h1v1h-1zM374 97h1v1h-1zM103 98h1v1h-1zM375 98h1v1h-1zM102 99h1v1h-1zM376 99h1v1h-1zM101 100h1v1h-1zM377 100h1v1h-1zM100 101h1v1h-1zM378 101h1v1h-1zM99 102h1v1h-1zM379 102h1v1h-1zM98 103h1v1h-1zM380 103h1v1h-1zM97 104h1v1h-1zM381 104h1v1h-1zM96 105h1v1h-1zM382 105h1v1h-1zM95 106h1v1h-1zM383 106h1v1h-1zM94 107h1v1h-1zM384 107h1v1h-1zM93 108h1v1h-1zM385 108h1v1h-1zM92 109h1v1h-1zM386 109h1v1h-1zM91 110h1v2h-1zM387 110h1v2h-1zM90 112h1v1h-1zM388 112h1v1h-1zM89 113h1v1h-1zM389 113h1v1h-1zM88 114h1v2h-1zM390 114h1v2h-1zM87 116h1v1h-1zM391 116h1v1h-1zM86 117h1v2h-1zM392 117h1v2h-1zM85 119h1v1h-1zM393 119h1v1h-1zM84 120h1v1h-1zM394 120h1v1h-1zM83 121h1v2h-1zM395 121h1v2h-1zM82 123h1v1h-1zM396 123h1v1h-1zM81 124h1v1h-1zM397 124h1v1h-1zM80 125h1v2h-1zM398 125h1v2h-1zM79 127h1v1h-1zM399 127h1v1h-1zM78 128h1v2h-1zM400 128h1v2h-1zM77 130h1v1h-1zM401 130h1v1h-1zM76 131h1v1h-1zM402 131h1v1h-1zM75 132h1v2h-1zM403 132h1v2h-1zM74 134h1v1h-1zM404 134h1v1h-1zM73 135h1v1h-1zM405 135h1v1h-1zM72 136h1v2h-1zM406 136h1v2h-1zM71 138h1v1h-1zM407 138h1v1h-1zM70 139h1v2h-1zM408 139h1v2h-1zM69 141h1v1h-1zM409 141h1v1h-1zM68 142h1v2h-1zM410 142h1v2h-1zM67 144h1v2h-1zM411 144h1v2h-1zM66 146h1v2h-1zM412 146h1v2h-1zM65 148h1v2h-1zM413 148h1v2h-1zM64 150h1v2h-1zM414 150h1v2h-1zM63 152h1v3h-1zM415 152h1v3h-1zM62 155h1v2h-1zM416 155h1v2h-1zM61 157h1v2h-1zM417 157h1v2h-1zM60 159h1v2h-1zM418 159h1v2h-1zM59 161h1v2h-1zM419 161h1v2h-1zM58 163h1v2h-1zM420 163h1v2h-1zM57 165h1v3h-1zM421 165h1v3h-1zM56 168h1v3h-1zM422 168h1v3h-1zM55 171h1v3h-1zM423 171h1v3h-1zM54 174h1v4h-1zM424 174h1v4h-1zM53 178h1v3h-1zM425 178h1v3h-1zM52 181h1v3h-1zM426 181h1v3h-1zM51 184h1v3h-1zM427 184h1v3h-1zM50 187h1v4h-1zM428 187h1v4h-1zM49 191h1v3h-1zM429 191h1v3h-1zM48 194h1v4h-1zM430 194h1v4h-1zM47 198h1v4h-1zM431 198h1v4h-1zM46 202h1v7h-1zM432 202h1v7h-1zM45 209h1v7h-1zM433 209h1v7h-1zM44 216h1v7h-1zM434 216h1v7h-1zM43 223h1v33h-1zM435 223h1v33h-1zM44 256h1v7h-1zM434 256h1v7h-1zM45 263h1v7h-1zM433 263h1v7h-1zM46 270h1v6h-1zM432 270h1v6h-1zM47 276h1v5h-1zM431 276h1v5h-1zM48 281h1v4h-1zM430 281h1v4h-1zM49 285h1v3h-1zM429 285h1v3h-1zM50 288h1v4h-1zM428 288h1v4h-1zM51 292h1v3h-1zM427 292h1v3h-1zM52 295h1v3h-1zM426 295h1v3h-1zM53 298h1v3h-1zM425 298h1v3h-1zM54 301h1v4h-1zM424 301h1v4h-1zM55 305h1v3h-1zM423 305h1v3h-1zM56 308h1v3h-1zM422 308h1v3h-1zM57 311h1v2h-1zM421 311h1v2h-1zM58 313h1v2h-1zM420 313h1v2h-1zM59 315h1v2h-1zM419 315h1v2h-1zM60 317h1v3h-1zM418 317h1v3h-1zM61 320h1v2h-1zM417 320h1v2h-1zM62 322h1v2h-1zM416 322h1v2h-1zM63 324h1v2h-1zM415 324h1v2h-1zM64 326h1v2h-1zM414 326h1v2h-1zM65 328h1v2h-1zM413 328h1v2h-1zM66 330h1v2h-1zM412 330h1v2h-1zM67 332h1v2h-1zM411 332h1v2h-1zM68 334h1v2h-1zM410 334h1v2h-1zM69 336h1v2h-1zM409 336h1v2h-1zM70 338h1v2h-1zM408 338h1v2h-1zM71 340h1v1h-1zM407 340h1v1h-1zM72 341h1v2h-1zM406 341h1v2h-1zM73 343h1v1h-1zM405 343h1v1h-1zM74 344h1v1h-1zM404 344h1v1h-1zM75 345h1v2h-1zM403 345h1v2h-1zM76 347h1v1h-1zM402 347h1v1h-1zM77 348h1v1h-1zM401 348h1v1h-1zM78 349h1v2h-1zM400 349h1v2h-1zM79 351h1v1h-1zM399 351h1v1h-1zM80 352h1v2h-1zM398 352h1v2h-1zM81 354h1v1h-1zM397 354h1v1h-1zM82 355h1v1h-1zM396 355h1v1h-1zM83 356h1v2h-1zM395 356h1v2h-1zM84 358h1v1h-1zM394 358h1v1h-1zM85 359h1v1h-1zM393 359h1v1h-1zM86 360h1v2h-1zM392 360h1v2h-1zM87 362h1v1h-1zM391 362h1v1h-1zM88 363h1v2h-1zM390 363h1v2h-1zM89 365h1v1h-1zM389 365h1v1h-1zM90 366h1v1h-1zM388 366h1v1h-1zM91 367h1v2h-1zM387 367h1v2h-1zM92 369h1v1h-1zM386 369h1v1h-1zM93 370h1v1h-1zM385 370h1v1h-1zM94 371h1v1h-1zM384 371h1v1h-1zM95 372h1v1h-1zM383 372h1v1h-1zM96 373h1v1h-1zM382 373h1v1h-1zM97 374h1v1h-1zM381 374h1v1h-1zM98 375h1v1h-1zM380 375h1v1h-1zM99 376h1v1h-1zM379 376h1v1h-1zM100 377h1v1h-1zM378 377h1v1h-1zM101 378h1v1h-1zM377 378h1v1h-1zM102 379h1v1h-1zM376 379h1v1h-1zM103 380h1v1h-1zM375 380h1v1h-1zM104 381h1v1h-1zM374 381h1v1h-1zM105 382h1v1h-1zM373 382h1v1h-1zM106 383h1v1h-1zM372 383h1v1h-1zM107 384h1v1h-1zM371 384h1v1h-1zM108 385h1v1h-1zM370 385h1v1h-1zM109 386h1v1h-1zM369 386h1v1h-1zM110 387h2v1h-2zM367 387h2v1h-2zM112 388h1v1h-1zM366 388h1v1h-1zM113 389h1v1h-1zM365 389h1v1h-1zM114 390h2v1h-2zM363 390h2v1h-2zM116 391h1v1h-1zM362 391h1v1h-1zM117 392h2v1h-2zM360 392h2v1h-2zM119 393h1v1h-1zM359 393h1v1h-1zM120 394h1v1h-1zM358 394h1v1h-1zM121 395h2v1h-2zM356 395h2v1h-2zM123 396h1v1h-1zM355 396h1v1h-1zM124 397h1v1h-1zM354 397h1v1h-1zM125 398h2v1h-2zM352 398h2v1h-2zM127 399h1v1h-1zM351 399h1v1h-1zM128 400h2v1h-2zM349 400h2v1h-2zM130 401h1v1h-1zM348 401h1v1h-1zM131 402h1v1h-1zM347 402h1v1h-1zM132 403h2v1h-2zM345 403h2v1h-2zM134 404h1v1h-1zM344 404h1v1h-1zM135 405h1v1h-1zM343 405h1v1h-1zM136 406h2v1h-2zM341 406h2v1h-2zM138 407h1v1h-1zM340 407h1v1h-1zM139 408h2v1h-2zM338 408h2v1h-2zM141 409h1v1h-1zM336 409h2v1h-2zM142 410h2v1h-2zM334 410h2v1h-2zM144 411h2v1h-2zM332 411h2v1h-2zM146 412h2v1h-2zM330 412h2v1h-2zM148 413h2v1h-2zM328 413h2v1h-2zM150 414h2v1h-2zM326 414h2v1h-2zM152 415h3v1h-3zM324 415h2v1h-2zM155 416h2v1h-2zM322 416h2v1h-2zM157 417h2v1h-2zM320 417h2v1h-2zM159 418h2v1h-2zM317 418h3v1h-3zM161 419h2v1h-2zM315 419h2v1h-2zM163 420h2v1h-2zM313 420h2v1h-2zM165 421h3v1h-3zM311 421h2v1h-2zM168 422h3v1h-3zM308 422h3v1h-3zM171 423h3v1h-3zM305 423h3v1h-3zM174 424h4v1h-4zM301 424h4v1h-4zM178 425h3v1h-3zM298 425h3v1h-3zM181 426h3v1h-3zM295 426h3v1h-3zM184 427h3v1h-3zM292 427h3v1h-3zM187 428h4v1h-4zM288 428h4v1h-4zM191 429h3v1h-3zM285 429h3v1h-3zM194 430h4v1h-4zM281 430h4v1h-4zM198 431h4v1h-4zM276 431h5v1h-5zM202 432h7v1h-7zM270 432h6v1h-6zM209 433h7v1h-7zM263 433h7v1h-7zM216 434h7v1h-7zM256 434h7v1h-7zM223 435h33v1h-33z"/>
<path id="circle78" fill="#fff" d="M223 53h32v1h-32zM217 54h6v1h-6zM255 54h6v1h-6zM211 55h6v1h-6zM261 55h7v1h-7zM204 56h7v1h-7zM268 56h6v1h-6zM200 57h4v1h-4zM274 57h5v1h-5zM196 58h4v1h-4zM279 58h4v1h-4zM191 59h5v1h-5zM283 59h4v1h-4zM187 60h4v1h-4zM287 60h5v1h-5zM184 61h3v1h-3zM292 61h3v1h-3zM181 62h3v1h-3zM295 62h3v1h-3zM178 63h3v1h-3zM298 63h3v1h-3zM175 64h3v1h-3zM301 64h2v1h-2zM173 65h2v1h-2zM303 65h2v1h-2zM171 66h2v1h-2zM305 66h2v1h-2zM169 67h2v1h-2zM307 67h3v1h-3zM166 68h3v1h-3zM310 68h3v1h-3zM163 69h3v1h-3zM313 69h2v1h-2zM161 70h2v1h-2zM315 70h2v1h-2zM159 71h2v1h-2zM317 71h2v1h-2zM157 72h2v1h-2zM319 72h2v1h-2zM155 73h2v1h-2zM321 73h2v1h-2zM153 74h2v1h-2zM323 74h2v1h-2zM151 75h2v1h-2zM325 75h2v1h-2zM149 76h2v1h-2zM327 76h2v1h-2zM147 77h2v1h-2zM329 77h2v1h-2zM146 78h1v1h-1zM331 78h2v1h-2zM144 79h2v1h-2zM333 79h2v1h-2zM142 80h2v1h-2zM335 80h2v1h-2zM141 81h1v1h-1zM337 81h1v1h-1zM139 82h2v1h-2zM338 82h2v1h-2zM138 83h1v1h-1zM340 83h1v1h-1zM136 84h2v1h-2zM341 84h2v1h-2zM135 85h1v1h-1zM343 85h1v1h-1zM134 86h1v1h-1zM344 86h1v1h-1zM132 87h2v1h-2zM345 87h2v1h-2zM131 88h1v1h-1zM347 88h1v1h-1zM130 89h1v1h-1zM348 89h1v1h-1zM129 90h1v1h-1zM349 90h1v1h-1zM127 91h2v1h-2zM350 91h2v1h-2zM126 92h1v1h-1zM352 92h1v1h-1zM125 93h1v1h-1zM353 93h1v1h-1zM124 94h1v1h-1zM354 94h1v1h-1zM122 95h2v1h-2zM355 95h2v1h-2zM121 96h1v1h-1zM357 96h1v1h-1zM120 97h1v1h-1zM358 97h1v1h-1zM119 98h1v1h-1zM359 98h1v1h-1zM117 99h2v1h-2zM360 99h2v1h-2zM116 100h1v1h-1zM362 100h1v1h-1zM115 101h1v1h-1zM363 101h1v1h-1zM114 102h1v1h-1zM364 102h1v1h-1zM112 103h2v1h-2zM365 103h2v1h-2zM111 104h1v1h-1zM367 104h1v1h-1zM110 105h1v1h-1zM368 105h1v1h-1zM109 106h1v1h-1zM369 106h1v1h-1zM108 107h1v1h-1zM370 107h1v1h-1zM107 108h1v1h-1zM371 108h1v1h-1zM106 109h1v1h-1zM372 109h1v1h-1zM105 110h1v1h-1zM373 110h1v1h-1zM104 111h1v1h-1zM374 111h1v1h-1zM103 112h1v2h-1zM375 112h1v2h-1zM102 114h1v1h-1zM376 114h1v1h-1zM101 115h1v1h-1zM377 115h1v1h-1zM100 116h1v1h-1zM378 116h1v1h-1zM99 117h1v2h-1zM379 117h1v2h-1zM98 119h1v1h-1zM380 119h1v1h-1zM97 120h1v1h-1zM381 120h1v1h-1zM96 121h1v1h-1zM382 121h1v1h-1zM95 122h1v2h-1zM383 122h1v2h-1zM94 124h1v1h-1zM384 124h1v1h-1zM93 125h1v1h-1zM385 125h1v1h-1zM92 126h1v1h-1zM386 126h1v1h-1zM91 127h1v2h-1zM387 127h1v2h-1zM90 129h1v1h-1zM388 129h1v1h-1zM89 130h1v1h-1zM389 130h1v1h-1zM88 131h1v1h-1zM390 131h1v1h-1zM87 132h1v2h-1zM391 132h1v2h-1zM86 134h1v1h-1zM392 134h1v1h-1zM85 135h1v1h-1zM393 135h1v1h-1zM84 136h1v2h-1zM394 136h1v2h-1zM83 138h1v1h-1zM395 138h1v1h-1zM82 139h1v2h-1zM396 139h1v2h-1zM81 141h1v1h-1zM397 141h1v1h-1zM80 142h1v2h-1zM398 142h1v2h-1zM79 144h1v2h-1zM399 144h1v2h-1zM78 146h1v1h-1zM400 146h1v1h-1zM77 147h1v2h-1zM401 147h1v2h-1zM76 149h1v2h-1zM402 149h1v2h-1zM75 151h1v2h-1zM403 151h1v2h-1zM74 153h1v2h-1zM404 153h1v2h-1zM73 155h1v2h-1zM405 155h1v2h-1zM72 157h1v2h-1zM406 157h1v2h-1zM71 159h1v2h-1zM407 159h1v2h-1zM70 161h1v2h-1zM408 161h1v2h-1zM69 163h1v3h-1zM409 163h1v3h-1zM68 166h1v3h-1zM410 166h1v3h-1zM67 169h1v2h-1zM411 169h1v2h-1zM66 171h1v2h-1zM412 171h1v2h-1zM65 173h1v2h-1zM413 173h1v2h-1zM64 175h1v3h-1zM414 175h1v3h-1zM63 178h1v3h-1zM415 178h1v3h-1zM62 181h1v3h-1zM416 181h1v3h-1zM61 184h1v3h-1zM417 184h1v3h-1zM60 187h1v4h-1zM418 187h1v4h-1zM59 191h1v5h-1zM419 191h1v5h-1zM58 196h1v4h-1zM420 196h1v4h-1zM57 200h1v4h-1zM421 200h1v4h-1zM56 204h1v7h-1zM422 204h1v7h-1zM55 211h1v6h-1zM423 211h1v6h-1zM54 217h1v6h-1zM424 217h1v6h-1zM53 223h1v32h-1zM425 223h1v32h-1zM54 255h1v6h-1zM424 255h1v6h-1zM55 261h1v7h-1zM423 261h1v7h-1zM56 268h1v6h-1zM422 268h1v6h-1zM57 274h1v5h-1zM421 274h1v5h-1zM58 279h1v4h-1zM420 279h1v4h-1zM59 283h1v4h-1zM419 283h1v4h-1zM60 287h1v5h-1zM418 287h1v5h-1zM61 292h1v3h-1zM417 292h1v3h-1zM62 295h1v3h-1zM416 295h1v3h-1zM63 298h1v3h-1zM415 298h1v3h-1zM64 301h1v2h-1zM414 301h1v2h-1zM65 303h1v2h-1zM413 303h1v2h-1zM66 305h1v2h-1zM412 305h1v2h-1zM67 307h1v3h-1zM411 307h1v3h-1zM68 310h1v3h-1zM410 310h1v3h-1zM69 313h1v2h-1zM409 313h1v2h-1zM70 315h1v2h-1zM408 315h1v2h-1zM71 317h1v2h-1zM407 317h1v2h-1zM72 319h1v2h-1zM406 319h1v2h-1zM73 321h1v2h-1zM405 321h1v2h-1zM74 323h1v2h-1zM404 323h1v2h-1zM75 325h1v2h-1zM403 325h1v2h-1zM76 327h1v2h-1zM402 327h1v2h-1zM77 329h1v2h-1zM401 329h1v2h-1zM78 331h1v2h-1zM400 331h1v2h-1zM79 333h1v2h-1zM399 333h1v2h-1zM80 335h1v2h-1zM398 335h1v2h-1zM81 337h1v1h-1zM397 337h1v1h-1zM82 338h1v2h-1zM396 338h1v2h-1zM83 340h1v1h-1zM395 340h1v1h-1zM84 341h1v2h-1zM394 341h1v2h-1zM85 343h1v1h-1zM393 343h1v1h-1zM86 344h1v1h-1zM392 344h1v1h-1zM87 345h1v2h-1zM391 345h1v2h-1zM88 347h1v1h-1zM390 347h1v1h-1zM89 348h1v1h-1zM389 348h1v1h-1zM90 349h1v1h-1zM388 349h1v1h-1zM91 350h1v2h-1zM387 350h1v2h-1zM92 352h1v1h-1zM386 352h1v1h-1zM93 353h1v1h-1zM385 353h1v1h-1zM94 354h1v1h-1zM384 354h1v1h-1zM95 355h1v2h-1zM383 355h1v2h-1zM96 357h1v1h-1zM382 357h1v1h-1zM97 358h1v1h-1zM381 358h1v1h-1zM98 359h1v1h-1zM380 359h1v1h-1zM99 360h1v2h-1zM379 360h1v2h-1zM100 362h1v1h-1zM378 362h1v1h-1zM101 363h1v1h-1zM377 363h1v1h-1zM102 364h1v1h-1zM376 364h1v1h-1zM103 365h1v2h-1zM375 365h1v2h-1zM104 367h1v1h-1zM374 367h1v1h-1zM105 368h1v1h-1zM373 368h1v1h-1zM106 369h1v1h-1zM372 369h1v1h-1zM107 370h1v1h-1zM371 370h1v1h-1zM108 371h1v1h-1zM370 371h1v1h-1zM109 372h1v1h-1zM369 372h1v1h-1zM110 373h1v1h-1zM368 373h1v1h-1zM111 374h1v1h-1zM367 374h1v1h-1zM112 375h2v1h-2zM365 375h2v1h-2zM114 376h1v1h-1zM364 376h1v1h-1zM115 377h1v1h-1zM363 377h1v1h-1zM116 378h1v1h-1zM362 378h1v1h-1zM117 379h2v1h-2zM360 379h2v1h-2zM119 380h1v1h-1zM359 380h1v1h-1zM120 381h1v1h-1zM358 381h1v1h-1zM121 382h1v1h-1zM357 382h1v1h-1zM122 383h2v1h-2zM355 383h2v1h-2zM124 384h1v1h-1zM354 384h1v1h-1zM125 385h1v1h-1zM353 385h1v1h-1zM126 386h1v1h-1zM352 386h1v1h-1zM127 387h2v1h-2zM350 387h2v1h-2zM129 388h1v1h-1zM349 388h1v1h-1zM130 389h1v1h-1zM348 389h1v1h-1zM131 390h1v1h-1zM347 390h1v1h-1zM132 391h2v1h-2zM345 391h2v1h-2zM134 392h1v1h-1zM344 392h1v1h-1zM135 393h1v1h-1zM343 393h1v1h-1zM136 394h2v1h-2zM341 394h2v1h-2zM138 395h1v1h-1zM340 395h1v1h-1zM139 396h2v1h-2zM338 396h2v1h-2zM141 397h1v1h-1zM337 397h1v1h-1zM142 398h2v1h-2zM335 398h2v1h-2zM144 399h2v1h-2zM333 399h2v1h-2zM146 400h1v1h-1zM331 400h2v1h-2zM147 401h2v1h-2zM329 401h2v1h-2zM149 402h2v1h-2zM327 402h2v1h-2zM151 403h2v1h-2zM325 403h2v1h-2zM153 404h2v1h-2zM323 404h2v1h-2zM155 405h2v1h-2zM321 405h2v1h-2zM157 406h2v1h-2zM319 406h2v1h-2zM159 407h2v1h-2zM317 407h2v1h-2zM161 408h2v1h-2zM315 408h2v1h-2zM163 409h3v1h-3zM313 409h2v1h-2zM166 410h3v1h-3zM310 410h3v1h-3zM169 411h2v1h-2zM307 411h3v1h-3zM171 412h2v1h-2zM305 412h2v1h-2zM173 413h2v1h-2zM303 413h2v1h-2zM175 414h3v1h-3zM301 414h2v1h-2zM178 415h3v1h-3zM298 415h3v1h-3zM181 416h3v1h-3zM295 416h3v1h-3zM184 417h3v1h-3zM292 417h3v1h-3zM187 418h4v1h-4zM287 418h5v1h-5zM191 419h5v1h-5zM283 419h4v1h-4zM196 420h4v1h-4zM279 420h4v1h-4zM200 421h4v1h-4zM274 421h5v1h-5zM204 422h7v1h-7zM268 422h6v1h-6zM211 423h6v1h-6zM261 423h7v1h-7zM217 424h6v1h-6zM255 424h6v1h-6zM223 425h32v1h-32z"/>
<path id="circle70" fill="#fff" d="M225 72h28v1h-28zM219 73h6v1h-6zM253 73h6v1h-6zM213 74h6v1h-6zM259 74h6v1h-6zM208 75h5v1h-5zM265 75h6v1h-6zM202 76h6v1h-6zM271 76h5v1h-5zM196 77h6v1h-6zM276 77h6v1h-6zM192 78h4v1h-4zM282 78h5v1h-5zM190 79h2v1h-2zM287 79h2v1h-2zM187 80h3v1h-3zM289 80h3v1h-3zM184 81h3v1h-3zM292 81h3v1h-3zM181 82h3v1h-3zM295 82h3v1h-3zM179 83h2v1h-2zM298 83h2v1h-2zM176 84h3v1h-3zM300 84h3v1h-3zM173 85h3v1h-3zM303 85h3v1h-3zM171 86h2v1h-2zM306 86h2v1h-2zM169 87h2v1h-2zM308 87h2v1h-2zM167 88h2v1h-2zM310 88h2v1h-2zM166 89h1v1h-1zM312 89h1v1h-1zM164 90h2v1h-2zM313 90h2v1h-2zM162 91h2v1h-2zM315 91h2v1h-2zM160 92h2v1h-2zM317 92h2v1h-2zM158 93h2v1h-2zM319 93h2v1h-2zM156 94h2v1h-2zM321 94h2v1h-2zM154 95h2v1h-2zM323 95h2v1h-2zM152 96h2v1h-2zM325 96h2v1h-2zM151 97h1v1h-1zM327 97h1v1h-1zM150 98h1v1h-1zM328 98h1v1h-1zM148 99h2v1h-2zM329 99h2v1h-2zM147 100h1v1h-1zM331 100h1v1h-1zM146 101h1v1h-1zM332 101h1v1h-1zM144 102h2v1h-2zM333 102h2v1h-2zM142 103h2v1h-2zM335 103h2v1h-2zM141 104h1v1h-1zM337 104h1v1h-1zM140 105h1v1h-1zM338 105h1v1h-1zM138 106h2v1h-2zM339 106h2v1h-2zM137 107h1v1h-1zM341 107h1v1h-1zM136 108h1v1h-1zM342 108h1v1h-1zM134 109h2v1h-2zM343 109h1v1h-1zM133 110h1v1h-1zM344 110h2v1h-2zM132 111h1v1h-1zM346 111h1v1h-1zM131 112h1v1h-1zM347 112h1v1h-1zM129 113h2v1h-2zM348 113h2v1h-2zM128 114h1v1h-1zM350 114h1v1h-1zM127 115h1v1h-1zM351 115h1v1h-1zM126 116h1v1h-1zM352 116h1v1h-1zM125 117h1v1h-1zM353 117h1v1h-1zM124 118h1v1h-1zM354 118h1v1h-1zM123 119h1v1h-1zM355 119h1v1h-1zM122 120h1v1h-1zM356 120h1v1h-1zM121 121h1v1h-1zM357 121h1v1h-1zM120 122h1v1h-1zM358 122h1v1h-1zM119 123h1v1h-1zM359 123h1v1h-1zM118 124h1v1h-1zM360 124h1v1h-1zM117 125h1v1h-1zM361 125h1v1h-1zM116 126h1v1h-1zM362 126h1v1h-1zM115 127h1v1h-1zM363 127h1v1h-1zM114 128h1v1h-1zM364 128h1v1h-1zM113 129h1v2h-1zM365 129h1v2h-1zM112 131h1v1h-1zM366 131h1v1h-1zM111 132h1v1h-1zM367 132h1v1h-1zM110 133h1v1h-1zM368 133h1v1h-1zM109 134h1v2h-1zM369 134h1v2h-1zM108 136h1v1h-1zM370 136h1v1h-1zM107 137h1v1h-1zM371 137h1v1h-1zM106 138h1v2h-1zM372 138h1v2h-1zM105 140h1v1h-1zM373 140h1v1h-1zM104 141h1v1h-1zM374 141h1v1h-1zM103 142h1v2h-1zM375 142h1v2h-1zM102 144h1v2h-1zM376 144h1v2h-1zM101 146h1v1h-1zM377 146h1v1h-1zM100 147h1v1h-1zM378 147h1v1h-1zM99 148h1v2h-1zM379 148h1v2h-1zM98 150h1v1h-1zM380 150h1v1h-1zM97 151h1v1h-1zM381 151h1v1h-1zM96 152h1v2h-1zM382 152h1v2h-1zM95 154h1v2h-1zM383 154h1v2h-1zM94 156h1v2h-1zM384 156h1v2h-1zM93 158h1v2h-1zM385 158h1v2h-1zM92 160h1v2h-1zM386 160h1v2h-1zM91 162h1v2h-1zM387 162h1v2h-1zM90 164h1v2h-1zM388 164h1v2h-1zM89 166h1v1h-1zM389 166h1v1h-1zM88 167h1v2h-1zM390 167h1v2h-1zM87 169h1v2h-1zM391 169h1v2h-1zM86 171h1v2h-1zM392 171h1v2h-1zM85 173h1v3h-1zM393 173h1v3h-1zM84 176h1v3h-1zM394 176h1v3h-1zM83 179h1v2h-1zM395 179h1v2h-1zM82 181h1v3h-1zM396 181h1v3h-1zM81 184h1v3h-1zM397 184h1v3h-1zM80 187h1v3h-1zM398 187h1v3h-1zM79 190h1v2h-1zM399 190h1v2h-1zM78 192h1v4h-1zM400 192h1v4h-1zM77 196h1v6h-1zM401 196h1v6h-1zM76 202h1v6h-1zM402 202h1v6h-1zM75 208h1v5h-1zM403 208h1v5h-1zM74 213h1v6h-1zM404 213h1v6h-1zM73 219h1v6h-1zM405 219h1v6h-1zM72 225h1v28h-1zM406 225h1v28h-1zM73 253h1v6h-1zM405 253h1v6h-1zM74 259h1v6h-1zM404 259h1v6h-1zM75 265h1v6h-1zM403 265h1v6h-1zM76 271h1v5h-1zM402 271h1v5h-1zM77 276h1v6h-1zM401 276h1v6h-1zM78 282h1v5h-1zM400 282h1v5h-1zM79 287h1v2h-1zM399 287h1v2h-1zM80 289h1v3h-1zM398 289h1v3h-1zM81 292h1v3h-1zM397 292h1v3h-1zM82 295h1v3h-1zM396 295h1v3h-1zM83 298h1v2h-1zM395 298h1v2h-1zM84 300h1v3h-1zM394 300h1v3h-1zM85 303h1v3h-1zM393 303h1v3h-1zM86 306h1v2h-1zM392 306h1v2h-1zM87 308h1v2h-1zM391 308h1v2h-1zM88 310h1v2h-1zM390 310h1v2h-1zM89 312h1v1h-1zM389 312h1v1h-1zM90 313h1v2h-1zM388 313h1v2h-1zM91 315h1v2h-1zM387 315h1v2h-1zM92 317h1v2h-1zM386 317h1v2h-1zM93 319h1v2h-1zM385 319h1v2h-1zM94 321h1v2h-1zM384 321h1v2h-1zM95 323h1v2h-1zM383 323h1v2h-1zM96 325h1v2h-1zM382 325h1v2h-1zM97 327h1v1h-1zM381 327h1v1h-1zM98 328h1v1h-1zM380 328h1v1h-1zM99 329h1v2h-1zM379 329h1v2h-1zM100 331h1v1h-1zM378 331h1v1h-1zM101 332h1v1h-1zM377 332h1v1h-1zM102 333h1v2h-1zM376 333h1v2h-1zM103 335h1v2h-1zM375 335h1v2h-1zM104 337h1v1h-1zM374 337h1v1h-1zM105 338h1v1h-1zM373 338h1v1h-1zM106 339h1v2h-1zM372 339h1v2h-1zM107 341h1v1h-1zM371 341h1v1h-1zM108 342h1v1h-1zM370 342h1v1h-1zM109 343h1v1h-1zM369 343h1v1h-1zM110 344h1v2h-1zM368 344h1v2h-1zM111 346h1v1h-1zM367 346h1v1h-1zM112 347h1v1h-1zM366 347h1v1h-1zM113 348h1v2h-1zM365 348h1v2h-1zM114 350h1v1h-1zM364 350h1v1h-1zM115 351h1v1h-1zM363 351h1v1h-1zM116 352h1v1h-1zM362 352h1v1h-1zM117 353h1v1h-1zM361 353h1v1h-1zM118 354h1v1h-1zM360 354h1v1h-1zM119 355h1v1h-1zM359 355h1v1h-1zM120 356h1v1h-1zM358 356h1v1h-1zM121 357h1v1h-1zM357 357h1v1h-1zM122 358h1v1h-1zM356 358h1v1h-1zM123 359h1v1h-1zM355 359h1v1h-1zM124 360h1v1h-1zM354 360h1v1h-1zM125 361h1v1h-1zM353 361h1v1h-1zM126 362h1v1h-1zM352 362h1v1h-1zM127 363h1v1h-1zM351 363h1v1h-1zM128 364h1v1h-1zM350 364h1v1h-1zM129 365h2v1h-2zM348 365h2v1h-2zM131 366h1v1h-1zM347 366h1v1h-1zM132 367h1v1h-1zM346 367h1v1h-1zM133 368h1v1h-1zM344 368h2v1h-2zM134 369h2v1h-2zM343 369h1v1h-1zM136 370h1v1h-1zM342 370h1v1h-1zM137 371h1v1h-1zM341 371h1v1h-1zM138 372h2v1h-2zM339 372h2v1h-2zM140 373h1v1h-1zM338 373h1v1h-1zM141 374h1v1h-1zM337 374h1v1h-1zM142 375h2v1h-2zM335 375h2v1h-2zM144 376h2v1h-2zM333 376h2v1h-2zM146 377h1v1h-1zM332 377h1v1h-1zM147 378h1v1h-1zM331 378h1v1h-1zM148 379h2v1h-2zM329 379h2v1h-2zM150 380h1v1h-1zM328 380h1v1h-1zM151 381h1v1h-1zM327 381h1v1h-1zM152 382h2v1h-2zM325 382h2v1h-2zM154 383h2v1h-2zM323 383h2v1h-2zM156 384h2v1h-2zM321 384h2v1h-2zM158 385h2v1h-2zM319 385h2v1h-2zM160 386h2v1h-2zM317 386h2v1h-2zM162 387h2v1h-2zM315 387h2v1h-2zM164 388h2v1h-2zM313 388h2v1h-2zM166 389h1v1h-1zM312 389h1v1h-1zM167 390h2v1h-2zM310 390h2v1h-2zM169 391h2v1h-2zM308 391h2v1h-2zM171 392h2v1h-2zM306 392h2v1h-2zM173 393h3v1h-3zM303 393h3v1h-3zM176 394h3v1h-3zM300 394h3v1h-3zM179 395h2v1h-2zM298 395h2v1h-2zM181 396h3v1h-3zM295 396h3v1h-3zM184 397h3v1h-3zM292 397h3v1h-3zM187 398h3v1h-3zM289 398h3v1h-3zM190 399h2v1h-2zM287 399h2v1h-2zM192 400h4v1h-4zM282 400h5v1h-5zM196 401h6v1h-6zM276 401h6v1h-6zM202 402h6v1h-6zM271 402h5v1h-5zM208 403h5v1h-5zM265 403h6v1h-6zM213 404h6v1h-6zM259 404h6v1h-6zM219 405h6v1h-6zM253 405h6v1h-6zM225 406h28v1h-28z"/>
<path id="signline1" fill="#fff" d="M430 284h3v1h-3zM433 285h4v1h-4zM437 286h4v1h-4zM441 287h4v1h-4zM445 288h4v1h-4zM449 289h4v1h-4zM453 290h4v1h-4zM457 291h3v1h-3z"/>
<path id="cusp1" fill="#fff" d="M53 239h19v1h-19z"/>
<path id="sign1" fill="#f00" d="M445 226h3v1h-3zM455 226h3v1h-3zM444 227h1v1h-1zM448 227h1v1h-1zM454 227h1v1h-1zM458 227h1v1h-1zM443 228h1v3h-1zM449 228h1v3h-1zM453 228h1v3h-1zM459 228h1v3h-1zM444 231h1v1h-1zM450 231h1v4h-1zM452 231h1v4h-1zM458 231h1v1h-1zM445 232h1v1h-1zM457 232h1v1h-1zM451 235h1v8h-1z"/>
<path id="signruler1" fill="#f00" d="M452 257h3v1h-3zM453 258h2v1h-2zM452 259h1v1h-1zM454 259h1v1h-1zM448 260h2v1h-2zM451 260h1v1h-1zM447 261h1v1h-1zM450 261h1v1h-1zM446 262h1v2h-1zM451 262h1v2h-1zM447 264h1v1h-1zM450 264h1v1h-1zM448 265h2v1h-2z"/>
<path id="houseruler1" fill="#f00" d="M65 256h3v1h-3zM66 257h2v1h-2zM65 258h1v1h-1zM67 258h1v1h-1zM61 259h2v1h-2zM64 259h1v1h-1zM60 260h1v1h-1zM63 260h1v1h-1zM59 261h1v2h-1zM64 261h1v2h-1zM60 263h1v1h-1zM63 263h1v1h-1zM61 264h2v1h-2z"/>
<path id="signline2" fill="#fff" d="M455 175h2v1h-2zM451 176h4v1h-4zM447 177h4v1h-4zM444 178h3v1h-3zM440 179h4v1h-4zM437 180h3v1h-3zM433 181h4v1h-4zM429 182h4v1h-4zM427 183h2v1h-2z"/>
<path id="cusp2" fill="#fff" d="M89 316h2v1h-2zM87 317h2v1h-2zM85 318h2v1h-2zM83 319h2v1h-2zM81 320h2v1h-2zM79 321h2v1h-2zM77 322h2v1h-2zM75 323h2v1h-2zM74 324h1v1h-1z"/>
<path id="cuspdot2" fill="#808080" d="M239 239h1v1h-1zM237 240h1v1h-1zM235 241h1v1h-1zM233 242h1v1h-1zM231 243h1v1h-1zM229 244h1v1h-1zM227 245h1v1h-1zM225 246h1v1h-1zM223 247h1v1h-1zM221 248h1v1h-1zM219 249h1v1h-1zM217 250h1v1h-1zM215 251h1v1h-1zM213 252h1v1h-1zM211 253h1v1h-1zM209 255h1v1h-1zM207 256h1v1h-1zM205 257h1v1h-1zM203 258h1v1h-1zM201 259h1v1h-1zM199 260h1v1h-1zM197 261h1v1h-1zM195 262h1v1h-1zM193 263h1v1h-1zM191 264h1v1h-1zM189 265h1v1h-1zM187 266h1v1h-1zM185 267h1v1h-1zM183 268h1v1h-1zM181 269h1v1h-1zM179 270h1v1h-1zM177 271h1v1h-1zM175 272h1v1h-1zM173 273h1v1h-1zM171 274h1v1h-1zM169 275h1v1h-1zM167 276h1v1h-1zM165 277h1v1h-1zM163 278h1v1h-1zM161 279h1v1h-1zM159 280h1v1h-1zM157 281h1v1h-1zM155 282h1v1h-1zM153 283h1v1h-1zM151 284h1v1h-1zM149 286h1v1h-1zM147 287h1v1h-1zM145 288h1v1h-1zM143 289h1v1h-1zM141 290h1v1h-1zM139 291h1v1h-1zM137 292h1v1h-1zM135 293h1v1h-1zM133 294h1v1h-1zM131 295h1v1h-1zM129 296h1v1h-1zM127 297h1v1h-1zM125 298h1v1h-1zM123 299h1v1h-1zM121 300h1v1h-1zM119 301h1v1h-1zM117 302h1v1h-1zM115 303h1v1h-1zM113 304h1v1h-1zM111 305h1v1h-1zM109 306h1v1h-1zM107 307h1v1h-1zM105 308h1v1h-1zM103 309h1v1h-1zM101 310h1v1h-1zM99 311h1v1h-1zM97 312h1v1h-1zM95 313h1v1h-1zM93 314h1v1h-1zM91 315h1v1h-1z"/>
<path id="sign2" fill="#ff0" d="M414 120h1v1h-1zM426 120h1v1h-1zM415 121h1v2h-1zM425 121h1v2h-1zM416 123h2v1h-2zM423 123h2v1h-2zM418 124h5v1h-5zM416 125h2v1h-2zM423 125h2v1h-2zM415 126h1v2h-1zM425 126h1v2h-1zM414 128h1v5h-1zM426 128h1v5h-1zM415 133h1v2h-1zM425 133h1v2h-1zM416 135h2v1h-2zM423 135h2v1h-2zM418 136h5v1h-5z"/>
<path id="signruler2" fill="#ff0" d="M432 149h3v1h-3zM431 150h1v3h-1zM435 150h1v3h-1zM432 153h3v1h-3zM433 153h1v5h-1zM431 155h5v1h-5z"/>
<path id="houseruler2" fill="#ff0" d="M93 337h3v1h-3zM92 338h1v3h-1zM96 338h1v3h-1zM93 341h3v1h-3zM94 341h1v5h-1zM92 343h5v1h-5z"/>
<path id="signline3" fill="#fff" d="M395 75h1v1h-1zM394 76h1v1h-1zM393 77h1v1h-1zM392 78h1v1h-1zM391 79h1v1h-1zM390 80h1v1h-1zM389 81h1v1h-1zM388 82h1v1h-1zM387 83h1v1h-1zM386 84h1v1h-1zM385 85h1v1h-1zM384 86h1v1h-1zM383 87h1v1h-1zM382 88h1v1h-1zM381 89h1v1h-1zM380 90h1v1h-1zM379 91h1v1h-1zM378 92h1v1h-1zM377 93h1v1h-1zM376 94h1v1h-1zM375 95h1v1h-1zM374 96h1v1h-1z"/>
<path id="cusp3" fill="#fff" d="M151 382h1v1h-1zM150 383h1v2h-1zM149 385h1v2h-1zM148 387h1v1h-1zM147 388h1v2h-1zM146 390h1v2h-1zM145 392h1v1h-1zM144 393h1v2h-1zM143 395h1v2h-1zM142 397h1v1h-1z"/>
<path id="cuspdot3" fill="#808080" d="M239 239h1v1h-1zM238 241h1v1h-1zM237 243h1v1h-1zM235 245h1v1h-1zM234 247h1v1h-1zM233 249h1v1h-1zM232 251h1v1h-1zM230 253h1v1h-1zM229 255h1v1h-1zM228 257h1v1h-1zM227 259h1v1h-1zM225 261h1v1h-1zM224 263h1v1h-1zM223 265h1v1h-1zM222 267h1v1h-1zM221 269h1v1h-1zM219 271h1v1h-1zM218 273h1v1h-1zM217 275h1v1h-1zM216 277h1v1h-1zM214 279h1v1h-1zM213 281h1v1h-1zM212 283h1v1h-1zM211 285h1v1h-1zM209 287h1v1h-1zM208 289h1v1h-1zM207 291h1v1h-1zM206 293h1v1h-1zM205 295h1v1h-1zM203 297h1v1h-1zM202 299h1v1h-1zM201 301h1v1h-1zM200 303h1v1h-1zM198 305h1v1h-1zM197 307h1v1h-1zM196 309h1v1h-1zM195 311h1v1h-1zM193 313h1v1h-1zM192 315h1v1h-1zM191 317h1v1h-1zM190 319h1v1h-1zM189 321h1v1h-1zM187 323h1v1h-1zM186 325h1v1h-1zM185 327h1v1h-1zM184 329h1v1h-1zM182 331h1v1h-1zM181 333h1v1h-1zM180 335h1v1h-1zM179 337h1v1h-1zM177 339h1v1h-1zM176 341h1v1h-1zM175 343h1v1h-1zM174 345h1v1h-1zM173 347h1v1h-1zM171 349h1v1h-1zM170 351h1v1h-1zM169 353h1v1h-1zM168 355h1v1h-1zM166 357h1v1h-1zM165 359h1v1h-1zM164 361h1v1h-1zM163 363h1v1h-1zM161 365h1v1h-1zM160 367h1v1h-1zM159 369h1v1h-1zM158 371h1v1h-1zM157 373h1v1h-1zM155 375h1v1h-1zM154 377h1v1h-1zM153 379h1v1h-1zM152 381h1v1h-1z"/>
<path id="sign3" fill="#0f0" d="M334 44h1v1h-1zM348 44h1v1h-1zM335 45h1v1h-1zM347 45h1v1h-1zM336 46h11v1h-11zM338 46h1v13h-1zM344 46h1v13h-1zM336 58h11v1h-11zM335 59h1v1h-1zM347 59h1v1h-1zM334 60h1v1h-1zM348 60h1v1h-1z"/>
<path id="signruler3" fill="#0f0" d="M362 63h1v1h-1zM366 63h1v1h-1zM363 64h3v1h-3zM362 65h1v3h-1zM366 65h1v3h-1zM363 68h3v1h-3zM364 69h1v3h-1zM362 70h5v1h-5z"/>
<path id="houseruler3" fill="#0f0" d="M167 398h1v1h-1zM171 398h1v1h-1zM168 399h3v1h-3zM167 400h1v3h-1zM171 400h1v3h-1zM168 403h3v1h-3zM169 404h1v3h-1zM167 405h5v1h-5z"/>
<path id="signline4" fill="#fff" d="M291 19h1v3h-1zM290 22h1v4h-1zM289 26h1v4h-1zM288 30h1v4h-1zM287 34h1v4h-1zM286 38h1v4h-1zM285 42h1v4h-1zM284 46h1v3h-1z"/>
<path id="cusp4" fill="#fff" d="M244 407h1v19h-1z"/>
<path id="sign4" fill="#00f" d="M232 20h5v1h-5zM229 21h3v1h-3zM237 21h1v1h-1zM228 22h1v1h-1zM238 22h3v1h-3zM227 23h1v1h-1zM237 23h1v1h-1zM241 23h1v1h-1zM226 24h1v1h-1zM236 24h1v3h-1zM242 24h1v3h-1zM228 26h3v1h-3zM227 27h1v1h-1zM231 27h1v1h-1zM237 27h1v1h-1zM241 27h1v1h-1zM226 28h1v3h-1zM232 28h1v3h-1zM238 28h3v1h-3zM242 30h1v1h-1zM227 31h1v1h-1zM231 31h1v1h-1zM241 31h1v1h-1zM228 32h3v1h-3zM240 32h1v1h-1zM231 33h1v1h-1zM237 33h3v1h-3zM232 34h5v1h-5z"/>
<path id="signruler4" fill="#00f" d="M259 24h3v1h-3zM258 25h1v1h-1zM262 25h2v1h-2zM259 26h1v1h-1zM263 26h1v1h-1zM260 27h1v3h-1zM264 27h1v3h-1zM259 30h1v1h-1zM263 30h1v1h-1zM258 31h1v1h-1zM262 31h2v1h-2zM259 32h3v1h-3z"/>
<path id="houseruler4" fill="#00f" d="M268 410h3v1h-3zM267 411h1v1h-1zM271 411h2v1h-2zM268 412h1v1h-1zM272 412h1v1h-1zM269 413h1v3h-1zM273 413h1v3h-1zM268 416h1v1h-1zM272 416h1v1h-1zM267 417h1v1h-1zM271 417h2v1h-2zM268 418h3v1h-3z"/>
<path id="signline5" fill="#fff" d="M175 22h1v2h-1zM176 24h1v4h-1zM177 28h1v4h-1zM178 32h1v3h-1zM179 35h1v4h-1zM180 39h1v3h-1zM181 42h1v4h-1zM182 46h1v4h-1zM183 50h1v2h-1z"/>
<path id="cusp5" fill="#fff" d="M335 377h1v1h-1zM336 378h1v2h-1zM337 380h1v1h-1zM338 381h1v1h-1zM339 382h1v2h-1zM340 384h1v1h-1zM341 385h1v2h-1zM342 387h1v1h-1zM343 388h1v1h-1zM344 389h1v2h-1zM345 391h1v1h-1z"/>
<path id="cuspdot5" fill="#808080" d="M239 239h1v1h-1zM240 241h1v1h-1zM242 243h1v1h-1zM243 245h1v1h-1zM245 247h1v1h-1zM246 249h1v1h-1zM247 251h1v1h-1zM249 253h1v1h-1zM250 255h1v1h-1zM252 257h1v1h-1zM253 259h1v1h-1zM254 261h1v1h-1zM256 263h1v1h-1zM257 265h1v1h-1zM258 267h1v1h-1zM260 269h1v1h-1zM261 271h1v1h-1zM263 273h1v1h-1zM264 275h1v1h-1zM265 277h1v1h-1zM267 279h1v1h-1zM268 281h1v1h-1zM270 283h1v1h-1zM271 285h1v1h-1zM272 287h1v1h-1zM274 289h1v1h-1zM275 291h1v1h-1zM277 293h1v1h-1zM278 295h1v1h-1zM279 297h1v1h-1zM281 299h1v1h-1zM282 301h1v1h-1zM284 303h1v1h-1zM285 305h1v1h-1zM286 307h1v1h-1zM288 309h1v1h-1zM289 311h1v1h-1zM290 313h1v1h-1zM292 315h1v1h-1zM293 317h1v1h-1zM295 319h1v1h-1zM296 321h1v1h-1zM297 323h1v1h-1zM299 325h1v1h-1zM300 327h1v1h-1zM302 329h1v1h-1zM303 331h1v1h-1zM304 333h1v1h-1zM306 335h1v1h-1zM307 337h1v1h-1zM309 339h1v1h-1zM310 341h1v1h-1zM311 343h1v1h-1zM313 345h1v1h-1zM314 347h1v1h-1zM316 349h1v1h-1zM317 351h1v1h-1zM318 353h1v1h-1zM320 355h1v1h-1zM321 357h1v1h-1zM322 359h1v1h-1zM324 361h1v1h-1zM325 363h1v1h-1zM327 365h1v1h-1zM328 367h1v1h-1zM329 369h1v1h-1zM331 371h1v1h-1zM332 373h1v1h-1zM334 375h1v1h-1zM335 377h1v1h-1z"/>
<path id="sign5" fill="#f00" d="M126 50h5v1h-5zM125 51h1v1h-1zM131 51h1v1h-1zM124 52h1v1h-1zM132 52h1v1h-1zM123 53h1v1h-1zM133 53h1v1h-1zM122 54h1v5h-1zM134 54h1v5h-1zM123 59h1v1h-1zM133 59h1v1h-1zM124 60h1v3h-1zM132 60h1v3h-1zM120 62h1v1h-1zM121 63h1v1h-1zM123 63h1v1h-1zM133 63h1v1h-1zM122 64h1v1h-1zM134 64h1v1h-1zM135 65h1v1h-1zM136 66h1v1h-1z"/>
<path id="signruler5" fill="#f00" d="M152 41h3v1h-3zM150 42h2v1h-2zM155 42h2v1h-2zM150 43h1v1h-1zM156 43h1v1h-1zM149 44h1v3h-1zM157 44h1v3h-1zM153 45h1v1h-1zM150 47h1v1h-1zM156 47h1v1h-1zM150 48h2v1h-2zM155 48h2v1h-2zM152 49h3v1h-3z"/>
<path id="houseruler5" fill="#f00" d="M357 366h3v1h-3zM355 367h2v1h-2zM360 367h2v1h-2zM355 368h1v1h-1zM361 368h1v1h-1zM354 369h1v3h-1zM362 369h1v3h-1zM358 370h1v1h-1zM355 372h1v1h-1zM361 372h1v1h-1zM355 373h2v1h-2zM360 373h2v1h-2zM357 374h3v1h-3z"/>
<path id="signline6" fill="#fff" d="M75 83h1v1h-1zM76 84h1v1h-1zM77 85h1v1h-1zM78 86h1v1h-1zM79 87h1v1h-1zM80 88h1v1h-1zM81 89h1v1h-1zM82 90h1v1h-1zM83 91h1v1h-1zM84 92h1v1h-1zM85 93h1v1h-1zM86 94h1v1h-1zM87 95h1v1h-1zM88 96h1v1h-1zM89 97h1v1h-1zM90 98h1v1h-1zM91 99h1v1h-1zM92 100h1v1h-1zM93 101h1v1h-1zM94 102h1v1h-1zM95 103h1v1h-1zM96 104h1v1h-1z"/>
<path id="cusp6" fill="#fff" d="M391 311h2v1h-2zM393 312h2v1h-2zM395 313h2v1h-2zM397 314h2v1h-2zM399 315h3v1h-3zM402 316h2v1h-2zM404 317h2v1h-2zM406 318h2v1h-2z"/>
<path id="cuspdot6" fill="#808080" d="M239 239h1v1h-1zM241 240h1v1h-1zM243 241h1v1h-1zM245 242h1v1h-1zM247 243h1v1h-1zM249 244h1v1h-1zM251 245h1v1h-1zM253 246h1v1h-1zM255 247h1v1h-1zM257 248h1v1h-1zM259 248h1v1h-1zM261 249h1v1h-1zM263 250h1v1h-1zM265 251h1v1h-1zM267 252h1v1h-1zM269 253h1v1h-1zM271 254h1v1h-1zM273 255h1v1h-1zM275 256h1v1h-1zM277 257h1v1h-1zM279 258h1v1h-1zM281 259h1v1h-1zM283 260h1v1h-1zM285 261h1v1h-1zM287 262h1v1h-1zM289 263h1v1h-1zM291 264h1v1h-1zM293 265h1v1h-1zM295 266h1v1h-1zM297 266h1v1h-1zM299 267h1v1h-1zM301 268h1v1h-1zM303 269h1v1h-1zM305 270h1v1h-1zM307 271h1v1h-1zM309 272h1v1h-1zM311 273h1v1h-1zM313 274h1v1h-1zM315 275h1v1h-1zM317 276h1v1h-1zM319 277h1v1h-1zM321 278h1v1h-1zM323 279h1v1h-1zM325 280h1v1h-1zM327 281h1v1h-1zM329 282h1v1h-1zM331 283h1v1h-1zM333 284h1v1h-1zM335 284h1v1h-1zM337 285h1v1h-1zM339 286h1v1h-1zM341 287h1v1h-1zM343 288h1v1h-1zM345 289h1v1h-1zM347 290h1v1h-1zM349 291h1v1h-1zM351 292h1v1h-1zM353 293h1v1h-1zM355 294h1v1h-1zM357 295h1v1h-1zM359 296h1v1h-1zM361 297h1v1h-1zM363 298h1v1h-1zM365 299h1v1h-1zM367 300h1v1h-1zM369 301h1v1h-1zM371 302h1v1h-1zM373 302h1v1h-1zM375 303h1v1h-1zM377 304h1v1h-1zM379 305h1v1h-1zM381 306h1v1h-1zM383 307h1v1h-1zM385 308h1v1h-1zM387 309h1v1h-1zM389 310h1v1h-1zM391 311h1v1h-1z"/>
<path id="sign6" fill="#ff0" d="M44 130h1v1h-1zM48 130h1v1h-1zM52 130h1v1h-1zM45 131h1v1h-1zM47 131h1v1h-1zM49 131h1v1h-1zM51 131h1v1h-1zM53 131h1v1h-1zM46 132h1v13h-1zM50 132h1v13h-1zM54 132h1v11h-1zM58 132h1v11h-1zM57 133h1v1h-1zM56 134h1v1h-1zM55 135h1v1h-1zM55 143h1v1h-1zM57 143h1v1h-1zM56 144h1v1h-1zM55 145h1v1h-1zM57 145h1v1h-1zM54 146h1v1h-1zM58 146h1v1h-1z"/>
<path id="signruler6" fill="#0f0" d="M65 110h1v1h-1zM69 110h1v1h-1zM66 111h3v1h-3zM65 112h1v3h-1zM69 112h1v3h-1zM66 115h3v1h-3zM67 116h1v3h-1zM65 117h5v1h-5z"/>
<path id="houseruler6" fill="#0f0" d="M405 292h1v1h-1zM409 292h1v1h-1zM406 293h3v1h-3zM405 294h1v3h-1zM409 294h1v3h-1zM406 297h3v1h-3zM407 298h1v3h-1zM405 299h5v1h-5z"/>
<path id="signline7" fill="#fff" d="M19 187h3v1h-3zM22 188h4v1h-4zM26 189h4v1h-4zM30 190h4v1h-4zM34 191h4v1h-4zM38 192h4v1h-4zM42 193h4v1h-4zM46 194h3v1h-3z"/>
<path id="cusp7" fill="#fff" d="M407 239h19v1h-19z"/>
<path id="sign7" fill="#0f0" d="M25 240h5v1h-5zM24 241h1v1h-1zM30 241h1v1h-1zM23 242h1v3h-1zM31 242h1v3h-1zM24 245h1v1h-1zM30 245h1v1h-1zM19 246h7v1h-7zM29 246h7v1h-7zM19 250h17v1h-17z"/>
<path id="signruler7" fill="#ff0" d="M27 213h3v1h-3zM26 214h1v3h-1zM30 214h1v3h-1zM27 217h3v1h-3zM28 217h1v5h-1zM26 219h5v1h-5z"/>
<path id="houseruler7" fill="#ff0" d="M414 214h3v1h-3zM413 215h1v3h-1zM417 215h1v3h-1zM414 218h3v1h-3zM415 218h1v5h-1zM413 220h5v1h-5z"/>
<path id="signline8" fill="#fff" d="M50 295h2v1h-2zM46 296h4v1h-4zM42 297h4v1h-4zM39 298h3v1h-3zM35 299h4v1h-4zM32 300h3v1h-3zM28 301h4v1h-4zM24 302h4v1h-4zM22 303h2v1h-2z"/>
<path id="cusp8" fill="#fff" d="M403 154h2v1h-2zM401 155h2v1h-2zM399 156h2v1h-2zM397 157h2v1h-2zM395 158h2v1h-2zM393 159h2v1h-2zM391 160h2v1h-2zM389 161h2v1h-2zM388 162h1v1h-1z"/>
<path id="cuspdot8" fill="#808080" d="M387 163h1v1h-1zM385 164h1v1h-1zM383 165h1v1h-1zM381 166h1v1h-1zM379 167h1v1h-1zM377 168h1v1h-1zM375 169h1v1h-1zM373 170h1v1h-1zM371 171h1v1h-1zM369 172h1v1h-1zM367 173h1v1h-1zM365 174h1v1h-1zM363 175h1v1h-1zM361 176h1v1h-1zM359 177h1v1h-1zM357 178h1v1h-1zM355 179h1v1h-1zM353 180h1v1h-1zM351 181h1v1h-1zM349 182h1v1h-1zM347 183h1v1h-1zM345 184h1v1h-1zM343 185h1v1h-1zM341 186h1v1h-1zM339 187h1v1h-1zM337 188h1v1h-1zM335 189h1v1h-1zM333 190h1v1h-1zM331 191h1v1h-1zM329 192h1v1h-1zM327 194h1v1h-1zM325 195h1v1h-1zM323 196h1v1h-1zM321 197h1v1h-1zM319 198h1v1h-1zM317 199h1v1h-1zM315 200h1v1h-1zM313 201h1v1h-1zM311 202h1v1h-1zM309 203h1v1h-1zM307 204h1v1h-1zM305 205h1v1h-1zM303 206h1v1h-1zM301 207h1v1h-1zM299 208h1v1h-1zM297 209h1v1h-1zM295 210h1v1h-1zM293 211h1v1h-1zM291 212h1v1h-1zM289 213h1v1h-1zM287 214h1v1h-1zM285 215h1v1h-1zM283 216h1v1h-1zM281 217h1v1h-1zM279 218h1v1h-1zM277 219h1v1h-1zM275 220h1v1h-1zM273 221h1v1h-1zM271 222h1v1h-1zM269 223h1v1h-1zM267 225h1v1h-1zM265 226h1v1h-1zM263 227h1v1h-1zM261 228h1v1h-1zM259 229h1v1h-1zM257 230h1v1h-1zM255 231h1v1h-1zM253 232h1v1h-1zM251 233h1v1h-1zM249 234h1v1h-1zM247 235h1v1h-1zM245 236h1v1h-1zM243 237h1v1h-1zM241 238h1v1h-1zM239 239h1v1h-1z"/>
<path id="sign8" fill="#00f" d="M50 342h1v1h-1zM54 342h1v1h-1zM58 342h1v1h-1zM51 343h1v1h-1zM53 343h1v1h-1zM55 343h1v1h-1zM57 343h1v1h-1zM59 343h1v1h-1zM52 344h1v13h-1zM56 344h1v13h-1zM60 344h1v13h-1zM65 353h1v4h-1zM64 354h3v1h-3zM61 357h1v1h-1zM64 357h1v1h-1zM62 358h2v1h-2z"/>
<path id="signruler8" fill="#00f" d="M42 321h1v3h-1zM45 321h1v1h-1zM48 321h1v3h-1zM44 322h1v1h-1zM46 322h1v1h-1zM45 323h1v1h-1zM43 324h1v1h-1zM47 324h1v1h-1zM44 325h3v1h-3zM45 325h1v5h-1zM43 327h5v1h-5z"/>
<path id="houseruler8" fill="#00f" d="M381 133h1v3h-1zM384 133h1v1h-1zM387 133h1v3h-1zM383 134h1v1h-1zM385 134h1v1h-1zM384 135h1v1h-1zM382 136h1v1h-1zM386 136h1v1h-1zM383 137h3v1h-3zM384 137h1v5h-1zM382 139h5v1h-5z"/>
<path id="signline9" fill="#fff" d="M104 382h1v1h-1zM103 383h1v1h-1zM102 384h1v1h-1zM101 385h1v1h-1zM100 386h1v1h-1zM99 387h1v1h-1zM98 388h1v1h-1zM97 389h1v1h-1zM96 390h1v1h-1zM95 391h1v1h-1zM94 392h1v1h-1zM93 393h1v1h-1zM92 394h1v1h-1zM91 395h1v1h-1zM90 396h1v1h-1zM89 397h1v1h-1zM88 398h1v1h-1zM87 399h1v1h-1zM86 400h1v1h-1zM85 401h1v1h-1zM84 402h1v1h-1zM83 403h1v1h-1z"/>
<path id="cusp9" fill="#fff" d="M336 81h1v1h-1zM335 82h1v2h-1zM334 84h1v2h-1zM333 86h1v1h-1zM332 87h1v2h-1zM331 89h1v2h-1zM330 91h1v1h-1zM329 92h1v2h-1zM328 94h1v2h-1zM327 96h1v1h-1z"/>
<path id="cuspdot9" fill="#808080" d="M326 97h1v1h-1zM325 99h1v1h-1zM324 101h1v1h-1zM323 103h1v1h-1zM321 105h1v1h-1zM320 107h1v1h-1zM319 109h1v1h-1zM318 111h1v1h-1zM317 113h1v1h-1zM315 115h1v1h-1zM314 117h1v1h-1zM313 119h1v1h-1zM312 121h1v1h-1zM310 123h1v1h-1zM309 125h1v1h-1zM308 127h1v1h-1zM307 129h1v1h-1zM305 131h1v1h-1zM304 133h1v1h-1zM303 135h1v1h-1zM302 137h1v1h-1zM301 139h1v1h-1zM299 141h1v1h-1zM298 143h1v1h-1zM297 145h1v1h-1zM296 147h1v1h-1zM294 149h1v1h-1zM293 151h1v1h-1zM292 153h1v1h-1zM291 155h1v1h-1zM289 157h1v1h-1zM288 159h1v1h-1zM287 161h1v1h-1zM286 163h1v1h-1zM285 165h1v1h-1zM283 167h1v1h-1zM282 169h1v1h-1zM281 171h1v1h-1zM280 173h1v1h-1zM278 175h1v1h-1zM277 177h1v1h-1zM276 179h1v1h-1zM275 181h1v1h-1zM273 183h1v1h-1zM272 185h1v1h-1zM271 187h1v1h-1zM270 189h1v1h-1zM269 191h1v1h-1zM267 193h1v1h-1zM266 195h1v1h-1zM265 197h1v1h-1zM264 199h1v1h-1zM262 201h1v1h-1zM261 203h1v1h-1zM260 205h1v1h-1zM259 207h1v1h-1zM257 209h1v1h-1zM256 211h1v1h-1zM255 213h1v1h-1zM254 215h1v1h-1zM253 217h1v1h-1zM251 219h1v1h-1zM250 221h1v1h-1zM249 223h1v1h-1zM248 225h1v1h-1zM246 227h1v1h-1zM245 229h1v1h-1zM244 231h1v1h-1zM243 233h1v1h-1zM241 235h1v1h-1zM240 237h1v1h-1zM239 239h1v1h-1z"/>
<path id="sign9" fill="#f00" d="M142 418h5v1h-5zM145 419h1v1h-1zM146 419h1v4h-1zM144 420h1v1h-1zM143 421h1v1h-1zM142 422h1v1h-1zM141 423h1v1h-1zM132 424h1v1h-1zM140 424h1v1h-1zM133 425h1v1h-1zM139 425h1v1h-1zM134 426h1v1h-1zM138 426h1v1h-1zM135 427h1v1h-1zM137 427h1v1h-1zM136 428h1v1h-1zM135 429h1v1h-1zM137 429h1v1h-1zM134 430h1v1h-1zM138 430h1v1h-1zM133 431h1v1h-1zM139 431h1v1h-1zM132 432h1v1h-1zM140 432h1v1h-1zM131 433h1v1h-1zM130 434h1v1h-1z"/>
<path id="signruler9" fill="#f00" d="M117 407h1v1h-1zM111 408h2v1h-2zM116 408h1v8h-1zM113 409h1v2h-1zM112 411h1v2h-1zM111 413h1v1h-1zM111 414h8v1h-8z"/>
<path id="houseruler9" fill="#f00" d="M312 72h1v1h-1zM306 73h2v1h-2zM311 73h1v8h-1zM308 74h1v2h-1zM307 76h1v2h-1zM306 78h1v1h-1zM306 79h8v1h-8z"/>
<path id="signline10" fill="#fff" d="M194 430h1v3h-1zM193 433h1v4h-1zM192 437h1v4h-1zM191 441h1v4h-1zM190 445h1v4h-1zM189 449h1v4h-1zM188 453h1v4h-1zM187 457h1v3h-1z"/>
<path id="cusp10" fill="#fff" d="M234 53h1v19h-1z"/>
<path id="sign10" fill="#ff0" d="M238 443h1v9h-1zM244 443h1v3h-1zM248 443h3v1h-3zM237 444h1v1h-1zM247 444h1v1h-1zM251 444h1v1h-1zM236 445h1v1h-1zM246 445h1v2h-1zM252 445h1v3h-1zM243 446h1v1h-1zM242 447h1v5h-1zM247 447h1v1h-1zM248 448h1v1h-1zM251 448h1v1h-1zM249 449h2v1h-2zM250 450h1v1h-1zM251 451h1v1h-1zM239 452h1v1h-1zM241 452h1v1h-1zM252 452h1v6h-1zM240 453h1v5h-1zM251 458h1v1h-1zM250 459h1v1h-1z"/>
<path id="signruler10" fill="#ff0" d="M216 446h1v8h-1zM214 447h5v1h-5zM218 449h2v1h-2zM217 450h1v1h-1zM220 450h1v2h-1zM219 452h1v2h-1zM220 454h1v1h-1z"/>
<path id="houseruler10" fill="#ff0" d="M207 60h1v8h-1zM205 61h5v1h-5zM209 63h2v1h-2zM208 64h1v1h-1zM211 64h1v2h-1zM210 66h1v2h-1zM211 68h1v1h-1z"/>
<path id="signline11" fill="#fff" d="M295 427h1v2h-1zM296 429h1v4h-1zM297 433h1v4h-1zM298 437h1v3h-1zM299 440h1v4h-1zM300 444h1v3h-1zM301 447h1v4h-1zM302 451h1v4h-1zM303 455h1v2h-1z"/>
<path id="cusp11" fill="#fff" d="M133 87h1v1h-1zM134 88h1v2h-1zM135 90h1v1h-1zM136 91h1v1h-1zM137 92h1v2h-1zM138 94h1v1h-1zM139 95h1v2h-1zM140 97h1v1h-1zM141 98h1v1h-1zM142 99h1v2h-1zM143 101h1v1h-1z"/>
<path id="cuspdot11" fill="#808080" d="M143 101h1v1h-1zM144 103h1v1h-1zM146 105h1v1h-1zM147 107h1v1h-1zM149 109h1v1h-1zM150 111h1v1h-1zM151 113h1v1h-1zM153 115h1v1h-1zM154 117h1v1h-1zM156 119h1v1h-1zM157 121h1v1h-1zM158 123h1v1h-1zM160 125h1v1h-1zM161 127h1v1h-1zM162 129h1v1h-1zM164 131h1v1h-1zM165 133h1v1h-1zM167 135h1v1h-1zM168 137h1v1h-1zM169 139h1v1h-1zM171 141h1v1h-1zM172 143h1v1h-1zM174 145h1v1h-1zM175 147h1v1h-1zM176 149h1v1h-1zM178 151h1v1h-1zM179 153h1v1h-1zM181 155h1v1h-1zM182 157h1v1h-1zM183 159h1v1h-1zM185 161h1v1h-1zM186 163h1v1h-1zM188 165h1v1h-1zM189 167h1v1h-1zM190 169h1v1h-1zM192 171h1v1h-1zM193 173h1v1h-1zM194 175h1v1h-1zM196 177h1v1h-1zM197 179h1v1h-1zM199 181h1v1h-1zM200 183h1v1h-1zM201 185h1v1h-1zM203 187h1v1h-1zM204 189h1v1h-1zM206 191h1v1h-1zM207 193h1v1h-1zM208 195h1v1h-1zM210 197h1v1h-1zM211 199h1v1h-1zM213 201h1v1h-1zM214 203h1v1h-1zM215 205h1v1h-1zM217 207h1v1h-1zM218 209h1v1h-1zM220 211h1v1h-1zM221 213h1v1h-1zM222 215h1v1h-1zM224 217h1v1h-1zM225 219h1v1h-1zM226 221h1v1h-1zM228 223h1v1h-1zM229 225h1v1h-1zM231 227h1v1h-1zM232 229h1v1h-1zM233 231h1v1h-1zM235 233h1v1h-1zM236 235h1v1h-1zM238 237h1v1h-1zM239 239h1v1h-1z"/>
<path id="sign11" fill="#0f0" d="M346 412h1v1h-1zM352 412h1v1h-1zM358 412h1v1h-1zM345 413h2v1h-2zM351 413h2v1h-2zM357 413h1v2h-1zM345 414h1v1h-1zM347 414h1v3h-1zM351 414h1v1h-1zM353 414h1v3h-1zM344 415h1v1h-1zM350 415h1v1h-1zM356 415h1v1h-1zM343 416h1v2h-1zM349 416h1v1h-1zM355 416h1v1h-1zM348 417h2v1h-2zM354 417h2v1h-2zM342 418h1v1h-1zM348 418h1v1h-1zM354 418h1v1h-1zM346 422h1v1h-1zM352 422h1v1h-1zM358 422h1v1h-1zM345 423h2v1h-2zM351 423h2v1h-2zM357 423h1v2h-1zM345 424h1v1h-1zM347 424h1v3h-1zM351 424h1v1h-1zM353 424h1v3h-1zM344 425h1v1h-1zM350 425h1v1h-1zM356 425h1v1h-1zM343 426h1v2h-1zM349 426h1v1h-1zM355 426h1v1h-1zM348 427h2v1h-2zM354 427h2v1h-2zM342 428h1v1h-1zM348 428h1v1h-1zM354 428h1v1h-1z"/>
<path id="signruler11" fill="#0f0" d="M322 429h1v1h-1zM328 429h1v1h-1zM323 430h1v4h-1zM327 430h1v4h-1zM325 431h1v5h-1zM323 432h5v1h-5zM322 434h1v1h-1zM328 434h1v1h-1zM324 436h1v1h-1zM326 436h1v1h-1zM325 437h1v1h-1z"/>
<path id="houseruler11" fill="#0f0" d="M117 104h1v1h-1zM123 104h1v1h-1zM118 105h1v4h-1zM122 105h1v4h-1zM120 106h1v5h-1zM118 107h5v1h-5zM117 109h1v1h-1zM123 109h1v1h-1zM119 111h1v1h-1zM121 111h1v1h-1zM120 112h1v1h-1z"/>
<path id="signline12" fill="#fff" d="M382 374h1v1h-1zM383 375h1v1h-1zM384 376h1v1h-1zM385 377h1v1h-1zM386 378h1v1h-1zM387 379h1v1h-1zM388 380h1v1h-1zM389 381h1v1h-1zM390 382h1v1h-1zM391 383h1v1h-1zM392 384h1v1h-1zM393 385h1v1h-1zM394 386h1v1h-1zM395 387h1v1h-1zM396 388h1v1h-1zM397 389h1v1h-1zM398 390h1v1h-1zM399 391h1v1h-1zM400 392h1v1h-1zM401 393h1v1h-1zM402 394h1v1h-1zM403 395h1v1h-1z"/>
<path id="cusp12" fill="#fff" d="M71 160h2v1h-2zM73 161h2v1h-2zM75 162h2v1h-2zM77 163h2v1h-2zM79 164h3v1h-3zM82 165h2v1h-2zM84 166h2v1h-2zM86 167h2v1h-2z"/>
<path id="cuspdot12" fill="#808080" d="M87 167h1v1h-1zM89 168h1v1h-1zM91 169h1v1h-1zM93 170h1v1h-1zM95 171h1v1h-1zM97 172h1v1h-1zM99 173h1v1h-1zM101 174h1v1h-1zM103 175h1v1h-1zM105 176h1v1h-1zM107 176h1v1h-1zM109 177h1v1h-1zM111 178h1v1h-1zM113 179h1v1h-1zM115 180h1v1h-1zM117 181h1v1h-1zM119 182h1v1h-1zM121 183h1v1h-1zM123 184h1v1h-1zM125 185h1v1h-1zM127 186h1v1h-1zM129 187h1v1h-1zM131 188h1v1h-1zM133 189h1v1h-1zM135 190h1v1h-1zM137 191h1v1h-1zM139 192h1v1h-1zM141 193h1v1h-1zM143 194h1v1h-1zM145 194h1v1h-1zM147 195h1v1h-1zM149 196h1v1h-1zM151 197h1v1h-1zM153 198h1v1h-1zM155 199h1v1h-1zM157 200h1v1h-1zM159 201h1v1h-1zM161 202h1v1h-1zM163 203h1v1h-1zM165 204h1v1h-1zM167 205h1v1h-1zM169 206h1v1h-1zM171 207h1v1h-1zM173 208h1v1h-1zM175 209h1v1h-1zM177 210h1v1h-1zM179 211h1v1h-1zM181 212h1v1h-1zM183 212h1v1h-1zM185 213h1v1h-1zM187 214h1v1h-1zM189 215h1v1h-1zM191 216h1v1h-1zM193 217h1v1h-1zM195 218h1v1h-1zM197 219h1v1h-1zM199 220h1v1h-1zM201 221h1v1h-1zM203 222h1v1h-1zM205 223h1v1h-1zM207 224h1v1h-1zM209 225h1v1h-1zM211 226h1v1h-1zM213 227h1v1h-1zM215 228h1v1h-1zM217 229h1v1h-1zM219 230h1v1h-1zM221 230h1v1h-1zM223 231h1v1h-1zM225 232h1v1h-1zM227 233h1v1h-1zM229 234h1v1h-1zM231 235h1v1h-1zM233 236h1v1h-1zM235 237h1v1h-1zM237 238h1v1h-1zM239 239h1v1h-1z"/>
<path id="sign12" fill="#00f" d="M418 332h1v1h-1zM434 332h1v1h-1zM419 333h1v1h-1zM433 333h1v1h-1zM420 334h1v1h-1zM432 334h1v1h-1zM421 335h1v2h-1zM431 335h1v2h-1zM422 337h1v7h-1zM430 337h1v7h-1zM418 340h17v1h-17zM421 344h1v2h-1zM431 344h1v2h-1zM420 346h1v1h-1zM432 346h1v1h-1zM419 347h1v1h-1zM433 347h1v1h-1zM418 348h1v1h-1zM434 348h1v1h-1z"/>
<path id="signruler12" fill="#00f" d="M408 360h1v3h-1zM411 360h1v9h-1zM414 360h1v3h-1zM407 361h1v1h-1zM410 361h3v1h-3zM415 361h1v1h-1zM409 363h1v1h-1zM413 363h1v1h-1zM410 364h3v1h-3zM409 366h5v1h-5z"/>
<path id="houseruler12" fill="#00f" d="M68 178h1v3h-1zM71 178h1v9h-1zM74 178h1v3h-1zM67 179h1v1h-1zM70 179h3v1h-3zM75 179h1v1h-1zM69 181h1v1h-1zM73 181h1v1h-1zM70 182h3v1h-3zM69 184h5v1h-5z"/>
<path id="o-link10" fill="#fff" d="M283 371h1v2h-1zM284 373h1v3h-1zM285 376h1v2h-1z"/>
<path id="o-obj10" fill="#00f" d="M282 379h1v5h-1zM287 379h3v1h-3zM294 379h1v5h-1zM286 380h1v3h-1zM290 380h1v3h-1zM287 383h3v1h-3zM283 384h1v2h-1zM293 384h1v2h-1zM284 386h2v1h-2zM291 386h2v1h-2zM286 387h5v1h-5zM288 387h1v9h-1zM284 391h9v1h-9z"/>
<path id="o-pt10" fill="#00f" d="M281 365h1v3h-1zM280 366h3v1h-3z"/>
<path id="o-pt210" fill="#00f" d="M271 336h1v3h-1zM270 337h3v1h-3z"/>
<path id="o-dots10" fill="#fff" d="M273 341h1v1h-1zM274 343h1v1h-1zM274 345h1v1h-1zM275 347h1v1h-1zM275 349h1v1h-1zM276 351h1v1h-1zM277 353h1v1h-1zM277 355h1v1h-1zM278 357h1v1h-1zM278 359h1v1h-1zM279 361h1v1h-1z"/>
<path id="o-link9" fill="#808080" d="M377 271h4v1h-4zM374 272h3v1h-3z"/>
<path id="o-obj9" fill="#00f" d="M385 266h1v5h-1zM391 266h1v17h-1zM397 266h1v5h-1zM384 268h3v1h-3zM389 268h5v1h-5zM396 268h3v1h-3zM386 271h1v2h-1zM396 271h1v2h-1zM387 273h2v1h-2zM394 273h2v1h-2zM389 274h5v1h-5zM387 278h9v1h-9z"/>
<path id="o-pt9" fill="#00f" d="M369 270h1v3h-1zM368 271h3v1h-3z"/>
<path id="o-pt29" fill="#00f" d="M339 263h1v3h-1zM338 264h3v1h-3z"/>
<path id="o-dots9" fill="#808080" d="M343 265h1v1h-1zM345 265h1v1h-1zM347 266h1v1h-1zM349 266h1v1h-1zM351 267h1v1h-1zM353 267h1v1h-1zM355 268h1v1h-1zM357 268h1v1h-1zM359 269h1v1h-1zM361 269h1v1h-1zM363 270h1v1h-1z"/>
<path id="o-link8" fill="#808080" d="M340 136h1v1h-1zM339 137h1v1h-1zM338 138h1v1h-1zM337 139h1v1h-1zM336 140h1v1h-1z"/>
<path id="o-obj8" fill="#0f0" d="M342 120h1v1h-1zM354 120h1v1h-1zM343 121h1v1h-1zM353 121h1v1h-1zM344 122h1v7h-1zM352 122h1v7h-1zM348 124h1v9h-1zM344 126h9v1h-9zM343 129h1v1h-1zM353 129h1v1h-1zM342 130h1v1h-1zM354 130h1v1h-1zM347 132h3v1h-3zM346 133h1v3h-1zM350 133h1v3h-1zM347 136h3v1h-3z"/>
<path id="o-pt8" fill="#0f0" d="M333 142h1v3h-1zM332 143h3v1h-3z"/>
<path id="o-pt28" fill="#0f0" d="M311 165h1v3h-1zM310 166h3v1h-3z"/>
<path id="o-dots8" fill="#808080" d="M328 148h1v1h-1zM326 150h1v1h-1zM324 152h1v1h-1zM322 154h1v1h-1zM320 156h1v1h-1zM318 158h1v1h-1zM316 160h1v1h-1zM314 162h1v1h-1z"/>
<path id="o-link7" fill="#fff" d="M371 282h1v1h-1zM372 283h1v2h-1zM373 285h1v2h-1zM374 287h1v2h-1zM375 289h1v1h-1z"/>
<path id="o-obj7" fill="#ff0" d="M383 285h1v15h-1zM379 287h9v1h-9zM387 291h3v1h-3zM386 292h1v1h-1zM390 292h1v1h-1zM384 293h2v1h-2zM391 293h1v3h-1zM390 296h1v1h-1zM389 297h1v3h-1zM390 300h1v1h-1zM391 301h1v1h-1z"/>
<path id="o-pt7" fill="#ff0" d="M366 280h1v3h-1zM365 281h3v1h-3z"/>
<path id="o-pt27" fill="#ff0" d="M337 270h1v3h-1zM336 271h3v1h-3z"/>
<path id="o-dots7" fill="#fff" d="M341 272h1v1h-1zM343 273h1v1h-1zM345 273h1v1h-1zM347 274h1v1h-1zM349 275h1v1h-1zM351 276h1v1h-1zM353 276h1v1h-1zM355 277h1v1h-1zM357 278h1v1h-1zM359 278h1v1h-1zM361 279h1v1h-1z"/>
<path id="o-link6" fill="#808080" d="M212 97h1v3h-1zM213 100h1v4h-1z"/>
<path id="o-obj6" fill="#f00" d="M216 78h1v1h-1zM215 79h1v1h-1zM205 80h2v1h-2zM214 80h1v15h-1zM207 81h1v1h-1zM208 82h1v3h-1zM207 85h1v2h-1zM206 87h1v2h-1zM205 89h1v2h-1zM204 91h1v1h-1zM204 92h15v1h-15z"/>
<path id="o-pt6" fill="#f00" d="M214 106h1v3h-1zM213 107h3v1h-3z"/>
<path id="o-pt26" fill="#f00" d="M220 137h1v3h-1zM219 138h3v1h-3z"/>
<path id="o-dots6" fill="#808080" d="M215 113h1v1h-1zM215 115h1v1h-1zM216 117h1v1h-1zM216 119h1v1h-1zM217 121h1v1h-1zM217 123h1v1h-1zM217 125h1v1h-1zM218 127h1v1h-1zM218 129h1v1h-1zM219 131h1v1h-1zM219 133h1v1h-1z"/>
<path id="o-link5" fill="#fff" d="M183 366h1v2h-1zM182 368h1v3h-1zM181 371h1v2h-1z"/>
<path id="o-obj5" fill="#f00" d="M179 373h6v1h-6zM183 374h1v1h-1zM184 374h1v5h-1zM182 375h1v1h-1zM181 376h1v1h-1zM180 377h1v1h-1zM179 378h1v1h-1zM171 379h5v1h-5zM178 379h1v1h-1zM170 380h1v1h-1zM176 380h2v1h-2zM169 381h1v1h-1zM177 381h1v1h-1zM168 382h1v5h-1zM178 382h1v5h-1zM169 387h1v1h-1zM177 387h1v1h-1zM170 388h1v1h-1zM176 388h1v1h-1zM171 389h5v1h-5z"/>
<path id="o-pt5" fill="#f00" d="M185 361h1v3h-1zM184 362h3v1h-3z"/>
<path id="o-pt25" fill="#f00" d="M198 332h1v3h-1zM197 333h3v1h-3z"/>
<path id="o-dots5" fill="#fff" d="M196 337h1v1h-1zM195 339h1v1h-1zM194 341h1v1h-1zM193 343h1v1h-1zM192 345h1v1h-1zM191 347h1v1h-1zM190 349h1v1h-1zM189 351h1v1h-1zM188 353h1v1h-1zM187 355h1v1h-1z"/>
<path id="o-link4" fill="#fff" d="M145 341h1v1h-1zM144 342h1v1h-1zM143 343h1v1h-1zM142 344h1v1h-1zM141 345h1v1h-1z"/>
<path id="o-obj4" fill="#ff0" d="M131 345h5v1h-5zM130 346h1v1h-1zM136 346h1v1h-1zM129 347h1v5h-1zM137 347h1v5h-1zM130 352h1v1h-1zM136 352h1v1h-1zM131 353h5v1h-5zM133 353h1v9h-1zM129 357h9v1h-9z"/>
<path id="o-pt4" fill="#ff0" d="M148 336h1v3h-1zM147 337h3v1h-3z"/>
<path id="o-pt24" fill="#ff0" d="M169 313h1v3h-1zM168 314h3v1h-3z"/>
<path id="o-dots4" fill="#fff" d="M166 318h1v1h-1zM164 320h1v1h-1zM162 322h1v1h-1zM160 324h1v1h-1zM159 326h1v1h-1zM157 328h1v1h-1zM155 330h1v1h-1zM153 332h1v1h-1z"/>
<path id="o-link3" fill="#fff" d="M129 323h1v1h-1zM128 324h1v1h-1zM126 325h2v1h-2zM125 326h1v1h-1zM124 327h1v1h-1z"/>
<path id="o-obj3" fill="#0f0" d="M111 326h1v1h-1zM119 326h1v1h-1zM112 327h1v1h-1zM118 327h1v1h-1zM113 328h5v1h-5zM112 329h1v1h-1zM118 329h1v1h-1zM111 330h1v5h-1zM119 330h1v5h-1zM112 335h1v1h-1zM118 335h1v1h-1zM113 336h5v1h-5zM115 336h1v7h-1zM111 340h9v1h-9z"/>
<path id="o-pt3" fill="#0f0" d="M133 319h1v3h-1zM132 320h3v1h-3z"/>
<path id="o-pt23" fill="#0f0" d="M157 300h1v3h-1zM156 301h3v1h-3z"/>
<path id="o-dots3" fill="#fff" d="M154 304h1v1h-1zM152 306h1v1h-1zM150 307h1v1h-1zM148 309h1v1h-1zM146 310h1v1h-1zM144 312h1v1h-1zM142 313h1v1h-1zM140 315h1v1h-1zM138 316h1v1h-1z"/>
<path id="o-link2" fill="#fff" d="M380 223h4v1h-4zM377 224h3v1h-3z"/>
<path id="o-obj2" fill="#00f" d="M390 214h5v1h-5zM389 215h1v1h-1zM395 215h2v1h-2zM388 216h1v1h-1zM397 216h1v1h-1zM389 217h1v1h-1zM398 217h1v1h-1zM390 218h1v1h-1zM399 218h1v2h-1zM391 219h1v2h-1zM400 220h1v5h-1zM392 221h1v3h-1zM391 224h1v2h-1zM399 225h1v2h-1zM390 226h1v1h-1zM389 227h1v1h-1zM398 227h1v1h-1zM388 228h1v1h-1zM397 228h1v1h-1zM389 229h1v1h-1zM395 229h2v1h-2zM390 230h5v1h-5z"/>
<path id="o-pt2" fill="#00f" d="M372 224h1v3h-1zM371 225h3v1h-3z"/>
<path id="o-pt22" fill="#00f" d="M341 227h1v3h-1zM340 228h3v1h-3z"/>
<path id="o-dots2" fill="#fff" d="M364 225h1v1h-1zM366 225h1v1h-1zM358 226h1v1h-1zM360 226h1v1h-1zM362 226h1v1h-1zM350 227h1v1h-1zM352 227h1v1h-1zM354 227h1v1h-1zM356 227h1v1h-1zM346 228h1v1h-1zM348 228h1v1h-1z"/>
<path id="o-link1" fill="#fff" d="M162 354h1v1h-1zM161 355h1v1h-1zM160 356h1v2h-1zM159 358h1v1h-1zM158 359h1v1h-1z"/>
<path id="o-obj1" fill="#f00" d="M150 360h5v1h-5zM148 361h2v1h-2zM155 361h2v1h-2zM147 362h1v1h-1zM157 362h1v1h-1zM146 363h1v1h-1zM158 363h1v1h-1zM145 364h1v2h-1zM159 364h1v2h-1zM144 366h1v5h-1zM160 366h1v5h-1zM152 368h1v1h-1zM145 371h1v2h-1zM159 371h1v2h-1zM146 373h1v1h-1zM158 373h1v1h-1zM147 374h1v1h-1zM157 374h1v1h-1zM148 375h2v1h-2zM155 375h2v1h-2zM150 376h5v1h-5z"/>
<path id="o-pt1" fill="#f00" d="M164 349h1v3h-1zM163 350h3v1h-3z"/>
<path id="o-pt21" fill="#f00" d="M182 323h1v3h-1zM181 324h3v1h-3z"/>
<path id="o-dots1" fill="#fff" d="M179 328h1v1h-1zM178 330h1v1h-1zM176 332h1v1h-1zM175 334h1v1h-1zM173 336h1v1h-1zM172 338h1v1h-1zM171 340h1v1h-1zM169 342h1v1h-1zM168 344h1v1h-1z"/>
<path id="i-link10" fill="#fff" d="M273 341h1v2h-1zM274 343h1v4h-1zM275 347h1v2h-1z"/>
<path id="i-obj10" fill="#00f" d="M272 349h1v5h-1zM277 349h3v1h-3zM284 349h1v5h-1zM276 350h1v3h-1zM280 350h1v3h-1zM277 353h3v1h-3zM273 354h1v2h-1zM283 354h1v2h-1zM274 356h2v1h-2zM281 356h2v1h-2zM276 357h5v1h-5zM278 357h1v9h-1zM274 361h9v1h-9z"/>
<path id="i-pt10" fill="#00f" d="M271 336h1v3h-1zM270 337h3v1h-3z"/>
<path id="i-link9" fill="#fff" d="M347 264h5v1h-5zM343 265h4v1h-4z"/>
<path id="i-obj9" fill="#00f" d="M354 258h1v5h-1zM360 258h1v17h-1zM366 258h1v5h-1zM353 260h3v1h-3zM358 260h5v1h-5zM365 260h3v1h-3zM355 263h1v2h-1zM365 263h1v2h-1zM356 265h2v1h-2zM363 265h2v1h-2zM358 266h5v1h-5zM356 270h9v1h-9z"/>
<path id="i-pt9" fill="#00f" d="M339 263h1v3h-1zM338 264h3v1h-3z"/>
<path id="i-link8" fill="#fff" d="M319 157h1v1h-1zM318 158h1v1h-1zM317 159h1v1h-1zM316 160h1v1h-1zM315 161h1v1h-1zM314 162h1v1h-1z"/>
<path id="i-obj8" fill="#0f0" d="M320 142h1v1h-1zM332 142h1v1h-1zM321 143h1v1h-1zM331 143h1v1h-1zM322 144h1v7h-1zM330 144h1v7h-1zM326 146h1v9h-1zM322 148h9v1h-9zM321 151h1v1h-1zM331 151h1v1h-1zM320 152h1v1h-1zM332 152h1v1h-1zM325 154h3v1h-3zM324 155h1v3h-1zM328 155h1v3h-1zM325 158h3v1h-3z"/>
<path id="i-pt8" fill="#0f0" d="M311 165h1v3h-1zM310 166h3v1h-3z"/>
<path id="i-link7" fill="#fff" d="M341 272h1v1h-1zM342 273h1v2h-1zM343 275h1v1h-1zM344 276h1v2h-1zM345 278h1v2h-1zM346 280h1v1h-1z"/>
<path id="i-obj7" fill="#ff0" d="M353 275h1v15h-1zM349 277h9v1h-9zM357 281h3v1h-3zM356 282h1v1h-1zM360 282h1v1h-1zM354 283h2v1h-2zM361 283h1v3h-1zM360 286h1v1h-1zM359 287h1v3h-1zM360 290h1v1h-1zM361 291h1v1h-1z"/>
<path id="i-pt7" fill="#ff0" d="M337 270h1v3h-1zM336 271h3v1h-3z"/>
<path id="i-link6" fill="#fff" d="M217 126h1v2h-1zM218 128h1v4h-1zM219 132h1v2h-1z"/>
<path id="i-obj6" fill="#f00" d="M222 109h1v1h-1zM221 110h1v1h-1zM211 111h2v1h-2zM220 111h1v15h-1zM213 112h1v1h-1zM214 113h1v3h-1zM213 116h1v2h-1zM212 118h1v2h-1zM211 120h1v2h-1zM210 122h1v1h-1zM210 123h15v1h-15z"/>
<path id="i-pt6" fill="#f00" d="M220 137h1v3h-1zM219 138h3v1h-3z"/>
<path id="i-link5" fill="#fff" d="M196 337h1v2h-1zM195 339h1v2h-1zM194 341h1v2h-1zM193 343h1v2h-1z"/>
<path id="i-obj5" fill="#f00" d="M192 345h6v1h-6zM196 346h1v1h-1zM197 346h1v5h-1zM195 347h1v1h-1zM194 348h1v1h-1zM193 349h1v1h-1zM192 350h1v1h-1zM184 351h5v1h-5zM191 351h1v1h-1zM183 352h1v1h-1zM189 352h2v1h-2zM182 353h1v1h-1zM190 353h1v1h-1zM181 354h1v5h-1zM191 354h1v5h-1zM182 359h1v1h-1zM190 359h1v1h-1zM183 360h1v1h-1zM189 360h1v1h-1zM184 361h5v1h-5z"/>
<path id="i-pt5" fill="#f00" d="M198 332h1v3h-1zM197 333h3v1h-3z"/>
<path id="i-link4" fill="#fff" d="M166 318h1v1h-1zM165 319h1v1h-1zM164 320h1v1h-1zM163 321h1v1h-1zM162 322h1v1h-1zM161 323h1v1h-1z"/>
<path id="i-obj4" fill="#ff0" d="M153 322h5v1h-5zM152 323h1v1h-1zM158 323h1v1h-1zM151 324h1v5h-1zM159 324h1v5h-1zM152 329h1v1h-1zM158 329h1v1h-1zM153 330h5v1h-5zM155 330h1v9h-1zM151 334h9v1h-9z"/>
<path id="i-pt4" fill="#ff0" d="M169 313h1v3h-1zM168 314h3v1h-3z"/>
<path id="i-link3" fill="#fff" d="M154 304h1v1h-1zM153 305h1v1h-1zM151 306h2v1h-2zM150 307h1v1h-1zM149 308h1v1h-1zM148 309h1v1h-1z"/>
<path id="i-obj3" fill="#0f0" d="M136 307h1v1h-1zM144 307h1v1h-1zM137 308h1v1h-1zM143 308h1v1h-1zM138 309h5v1h-5zM137 310h1v1h-1zM143 310h1v1h-1zM136 311h1v5h-1zM144 311h1v5h-1zM137 316h1v1h-1zM143 316h1v1h-1zM138 317h5v1h-5zM140 317h1v7h-1zM136 321h9v1h-9z"/>
<path id="i-pt3" fill="#0f0" d="M157 300h1v3h-1zM156 301h3v1h-3z"/>
<path id="i-link2" fill="#fff" d="M350 227h4v1h-4zM346 228h4v1h-4z"/>
<path id="i-obj2" fill="#00f" d="M359 218h5v1h-5zM358 219h1v1h-1zM364 219h2v1h-2zM357 220h1v1h-1zM366 220h1v1h-1zM358 221h1v1h-1zM367 221h1v1h-1zM359 222h1v1h-1zM368 222h1v2h-1zM360 223h1v2h-1zM369 224h1v5h-1zM361 225h1v3h-1zM360 228h1v2h-1zM368 229h1v2h-1zM359 230h1v1h-1zM358 231h1v1h-1zM367 231h1v1h-1zM357 232h1v1h-1zM366 232h1v1h-1zM358 233h1v1h-1zM364 233h2v1h-2zM359 234h5v1h-5z"/>
<path id="i-pt2" fill="#00f" d="M341 227h1v3h-1zM340 228h3v1h-3z"/>
<path id="i-link1" fill="#fff" d="M179 328h1v1h-1zM178 329h1v2h-1zM177 331h1v1h-1zM176 332h1v2h-1zM175 334h1v1h-1z"/>
<path id="i-obj1" fill="#f00" d="M168 334h5v1h-5zM166 335h2v1h-2zM173 335h2v1h-2zM165 336h1v1h-1zM175 336h1v1h-1zM164 337h1v1h-1zM176 337h1v1h-1zM163 338h1v2h-1zM177 338h1v2h-1zM162 340h1v5h-1zM178 340h1v5h-1zM170 342h1v1h-1zM163 345h1v2h-1zM177 345h1v2h-1zM164 347h1v1h-1zM176 347h1v1h-1zM165 348h1v1h-1zM175 348h1v1h-1zM166 349h2v1h-2zM173 349h2v1h-2zM168 350h5v1h-5z"/>
<path id="i-pt1" fill="#f00" d="M182 323h1v3h-1zM181 324h3v1h-3z"/>
<path id="asp10-10" fill="#ff0" d="M270 332h1v1h-1z"/>
<path id="asp10-4" fill="#0ff" d="M173 311h3v1h-3zM176 312h4v1h-4zM180 313h5v1h-5zM185 314h5v1h-5zM190 315h4v1h-4zM194 316h5v1h-5zM199 317h5v1h-5zM204 318h4v1h-4zM208 319h5v1h-5zM213 320h4v1h-4zM217 321h5v1h-5zM222 322h5v1h-5zM227 323h4v1h-4zM231 324h5v1h-5zM236 325h4v1h-4zM240 326h5v1h-5zM245 327h5v1h-5zM250 328h4v1h-4zM254 329h5v1h-5zM259 330h5v1h-5zM264 331h4v1h-4zM268 332h3v1h-3z"/>
<path id="asp9-9" fill="#ff0" d="M334 262h1v1h-1z"/>
<path id="asp9-8" fill="#0ff" d="M308 169h1v2h-1zM309 171h1v4h-1zM310 175h1v3h-1zM311 178h1v4h-1zM312 182h1v4h-1zM313 186h1v3h-1zM314 189h1v4h-1zM315 193h1v3h-1zM316 196h1v4h-1zM317 200h1v3h-1zM318 203h1v4h-1zM319 207h1v4h-1zM320 211h1v3h-1zM321 214h1v4h-1zM322 218h1v3h-1zM323 221h1v4h-1zM324 225h1v4h-1zM325 229h1v3h-1zM326 232h1v4h-1zM327 236h1v3h-1zM328 239h1v4h-1zM329 243h1v3h-1zM330 246h1v4h-1zM331 250h1v4h-1zM332 254h1v3h-1zM333 257h1v4h-1zM334 261h1v2h-1z"/>
<path id="asp9-4" fill="#0f0" d="M333 262h2v1h-2zM330 263h3v1h-3zM326 264h4v1h-4zM323 265h3v1h-3zM320 266h3v1h-3zM316 267h4v1h-4zM313 268h3v1h-3zM310 269h3v1h-3zM307 270h3v1h-3zM303 271h4v1h-4zM300 272h3v1h-3zM297 273h3v1h-3zM293 274h4v1h-4zM290 275h3v1h-3zM287 276h3v1h-3zM284 277h3v1h-3zM280 278h4v1h-4zM277 279h3v1h-3zM274 280h3v1h-3zM270 281h4v1h-4zM267 282h3v1h-3zM264 283h3v1h-3zM261 284h3v1h-3zM257 285h4v1h-4zM254 286h3v1h-3zM251 287h3v1h-3zM247 288h4v1h-4zM244 289h3v1h-3zM241 290h3v1h-3zM238 291h3v1h-3zM234 292h4v1h-4zM231 293h3v1h-3zM228 294h3v1h-3zM224 295h4v1h-4zM221 296h3v1h-3zM218 297h3v1h-3zM215 298h3v1h-3zM211 299h4v1h-4zM208 300h3v1h-3zM205 301h3v1h-3zM201 302h4v1h-4zM198 303h3v1h-3zM195 304h3v1h-3zM192 305h3v1h-3zM188 306h4v1h-4zM185 307h3v1h-3zM182 308h3v1h-3zM178 309h4v1h-4zM175 310h3v1h-3zM173 311h2v1h-2z"/>
<path id="asp8-9" fill="#0ff" d="M308 169h1v2h-1zM309 171h1v4h-1zM310 175h1v3h-1zM311 178h1v4h-1zM312 182h1v4h-1zM313 186h1v3h-1zM314 189h1v4h-1zM315 193h1v3h-1zM316 196h1v4h-1zM317 200h1v3h-1zM318 203h1v4h-1zM319 207h1v4h-1zM320 211h1v3h-1zM321 214h1v4h-1zM322 218h1v3h-1zM323 221h1v4h-1zM324 225h1v4h-1zM325 229h1v3h-1zM326 232h1v4h-1zM327 236h1v3h-1zM328 239h1v4h-1zM329 243h1v3h-1zM330 246h1v4h-1zM331 250h1v4h-1zM332 254h1v3h-1zM333 257h1v4h-1zM334 261h1v2h-1z"/>
<path id="asp8-8" fill="#ff0" d="M308 169h1v1h-1z"/>
<path id="asp8-4" fill="#00f" d="M308 169h1v1h-1zM305 172h1v1h-1zM302 175h1v1h-1zM299 178h1v1h-1zM297 181h1v1h-1zM294 184h1v1h-1zM291 187h1v1h-1zM288 190h1v1h-1zM285 193h1v1h-1zM282 196h1v1h-1zM279 199h1v1h-1zM277 202h1v1h-1zM274 205h1v1h-1zM271 208h1v1h-1zM268 211h1v1h-1zM265 214h1v1h-1zM262 217h1v1h-1zM260 220h1v1h-1zM257 223h1v1h-1zM254 226h1v1h-1zM251 229h1v1h-1zM248 232h1v1h-1zM245 235h1v1h-1zM242 238h1v1h-1zM240 241h1v1h-1zM237 244h1v1h-1zM234 247h1v1h-1zM231 250h1v1h-1zM228 253h1v1h-1zM225 256h1v1h-1zM222 259h1v1h-1zM220 262h1v1h-1zM217 265h1v1h-1zM214 268h1v1h-1zM211 271h1v1h-1zM208 274h1v1h-1zM205 277h1v1h-1zM202 280h1v1h-1zM200 283h1v1h-1zM197 286h1v1h-1zM194 289h1v1h-1zM191 292h1v1h-1zM188 295h1v1h-1zM185 298h1v1h-1zM183 301h1v1h-1zM180 304h1v1h-1zM177 307h1v1h-1zM174 310h1v1h-1z"/>
<path id="asp7-7" fill="#ff0" d="M332 269h1v1h-1z"/>
<path id="asp7-6" fill="#0f0" d="M221 143h1v1h-1zM222 144h1v1h-1zM223 145h1v1h-1zM224 146h1v1h-1zM225 147h1v2h-1zM226 149h1v1h-1zM227 150h1v1h-1zM228 151h1v1h-1zM229 152h1v1h-1zM230 153h1v1h-1zM231 154h1v1h-1zM232 155h1v2h-1zM233 157h1v1h-1zM234 158h1v1h-1zM235 159h1v1h-1zM236 160h1v1h-1zM237 161h1v1h-1zM238 162h1v1h-1zM239 163h1v1h-1zM240 164h1v2h-1zM241 166h1v1h-1zM242 167h1v1h-1zM243 168h1v1h-1zM244 169h1v1h-1zM245 170h1v1h-1zM246 171h1v1h-1zM247 172h1v2h-1zM248 174h1v1h-1zM249 175h1v1h-1zM250 176h1v1h-1zM251 177h1v1h-1zM252 178h1v1h-1zM253 179h1v1h-1zM254 180h1v2h-1zM255 182h1v1h-1zM256 183h1v1h-1zM257 184h1v1h-1zM258 185h1v1h-1zM259 186h1v1h-1zM260 187h1v1h-1zM261 188h1v1h-1zM262 189h1v2h-1zM263 191h1v1h-1zM264 192h1v1h-1zM265 193h1v1h-1zM266 194h1v1h-1zM267 195h1v1h-1zM268 196h1v1h-1zM269 197h1v2h-1zM270 199h1v1h-1zM271 200h1v1h-1zM272 201h1v1h-1zM273 202h1v1h-1zM274 203h1v1h-1zM275 204h1v1h-1zM276 205h1v1h-1zM277 206h1v2h-1zM278 208h1v1h-1zM279 209h1v1h-1zM280 210h1v1h-1zM281 211h1v1h-1zM282 212h1v1h-1zM283 213h1v1h-1zM284 214h1v2h-1zM285 216h1v1h-1zM286 217h1v1h-1zM287 218h1v1h-1zM288 219h1v1h-1zM289 220h1v1h-1zM290 221h1v1h-1zM291 222h1v2h-1zM292 224h1v1h-1zM293 225h1v1h-1zM294 226h1v1h-1zM295 227h1v1h-1zM296 228h1v1h-1zM297 229h1v1h-1zM298 230h1v1h-1zM299 231h1v2h-1zM300 233h1v1h-1zM301 234h1v1h-1zM302 235h1v1h-1zM303 236h1v1h-1zM304 237h1v1h-1zM305 238h1v1h-1zM306 239h1v2h-1zM307 241h1v1h-1zM308 242h1v1h-1zM309 243h1v1h-1zM310 244h1v1h-1zM311 245h1v1h-1zM312 246h1v1h-1zM313 247h1v1h-1zM314 248h1v2h-1zM315 250h1v1h-1zM316 251h1v1h-1zM317 252h1v1h-1zM318 253h1v1h-1zM319 254h1v1h-1zM320 255h1v1h-1zM321 256h1v2h-1zM322 258h1v1h-1zM323 259h1v1h-1zM324 260h1v1h-1zM325 261h1v1h-1zM326 262h1v1h-1zM327 263h1v1h-1zM328 264h1v2h-1zM329 266h1v1h-1zM330 267h1v1h-1zM331 268h1v1h-1zM332 269h1v1h-1z"/>
<path id="asp6-7" fill="#0f0" d="M221 143h1v1h-1zM222 144h1v1h-1zM223 145h1v1h-1zM224 146h1v1h-1zM225 147h1v2h-1zM226 149h1v1h-1zM227 150h1v1h-1zM228 151h1v1h-1zM229 152h1v1h-1zM230 153h1v1h-1zM231 154h1v1h-1zM232 155h1v2h-1zM233 157h1v1h-1zM234 158h1v1h-1zM235 159h1v1h-1zM236 160h1v1h-1zM237 161h1v1h-1zM238 162h1v1h-1zM239 163h1v1h-1zM240 164h1v2h-1zM241 166h1v1h-1zM242 167h1v1h-1zM243 168h1v1h-1zM244 169h1v1h-1zM245 170h1v1h-1zM246 171h1v1h-1zM247 172h1v2h-1zM248 174h1v1h-1zM249 175h1v1h-1zM250 176h1v1h-1zM251 177h1v1h-1zM252 178h1v1h-1zM253 179h1v1h-1zM254 180h1v2h-1zM255 182h1v1h-1zM256 183h1v1h-1zM257 184h1v1h-1zM258 185h1v1h-1zM259 186h1v1h-1zM260 187h1v1h-1zM261 188h1v1h-1zM262 189h1v2h-1zM263 191h1v1h-1zM264 192h1v1h-1zM265 193h1v1h-1zM266 194h1v1h-1zM267 195h1v1h-1zM268 196h1v1h-1zM269 197h1v2h-1zM270 199h1v1h-1zM271 200h1v1h-1zM272 201h1v1h-1zM273 202h1v1h-1zM274 203h1v1h-1zM275 204h1v1h-1zM276 205h1v1h-1zM277 206h1v2h-1zM278 208h1v1h-1zM279 209h1v1h-1zM280 210h1v1h-1zM281 211h1v1h-1zM282 212h1v1h-1zM283 213h1v1h-1zM284 214h1v2h-1zM285 216h1v1h-1zM286 217h1v1h-1zM287 218h1v1h-1zM288 219h1v1h-1zM289 220h1v1h-1zM290 221h1v1h-1zM291 222h1v2h-1zM292 224h1v1h-1zM293 225h1v1h-1zM294 226h1v1h-1zM295 227h1v1h-1zM296 228h1v1h-1zM297 229h1v1h-1zM298 230h1v1h-1zM299 231h1v2h-1zM300 233h1v1h-1zM301 234h1v1h-1zM302 235h1v1h-1zM303 236h1v1h-1zM304 237h1v1h-1zM305 238h1v1h-1zM306 239h1v2h-1zM307 241h1v1h-1zM308 242h1v1h-1zM309 243h1v1h-1zM310 244h1v1h-1zM311 245h1v1h-1zM312 246h1v1h-1zM313 247h1v1h-1zM314 248h1v2h-1zM315 250h1v1h-1zM316 251h1v1h-1zM317 252h1v1h-1zM318 253h1v1h-1zM319 254h1v1h-1zM320 255h1v1h-1zM321 256h1v2h-1zM322 258h1v1h-1zM323 259h1v1h-1zM324 260h1v1h-1zM325 261h1v1h-1zM326 262h1v1h-1zM327 263h1v1h-1zM328 264h1v2h-1zM329 266h1v1h-1zM330 267h1v1h-1zM331 268h1v1h-1zM332 269h1v1h-1z"/>
<path id="asp6-6" fill="#ff0" d="M221 143h1v1h-1z"/>
<path id="asp5-5" fill="#ff0" d="M200 329h1v1h-1z"/>
<path id="asp5-2" fill="#0f0" d="M336 229h1v1h-1zM334 230h2v1h-2zM333 231h1v1h-1zM332 232h1v1h-1zM330 233h2v1h-2zM329 234h1v1h-1zM328 235h1v1h-1zM326 236h2v1h-2zM325 237h1v1h-1zM324 238h1v1h-1zM322 239h2v1h-2zM321 240h1v1h-1zM319 241h2v1h-2zM318 242h1v1h-1zM317 243h1v1h-1zM315 244h2v1h-2zM314 245h1v1h-1zM313 246h1v1h-1zM311 247h2v1h-2zM310 248h1v1h-1zM309 249h1v1h-1zM307 250h2v1h-2zM306 251h1v1h-1zM305 252h1v1h-1zM303 253h2v1h-2zM302 254h1v1h-1zM300 255h2v1h-2zM299 256h1v1h-1zM298 257h1v1h-1zM296 258h2v1h-2zM295 259h1v1h-1zM294 260h1v1h-1zM292 261h2v1h-2zM291 262h1v1h-1zM290 263h1v1h-1zM288 264h2v1h-2zM287 265h1v1h-1zM285 266h2v1h-2zM284 267h1v1h-1zM283 268h1v1h-1zM281 269h2v1h-2zM280 270h1v1h-1zM279 271h1v1h-1zM277 272h2v1h-2zM276 273h1v1h-1zM275 274h1v1h-1zM273 275h2v1h-2zM272 276h1v1h-1zM271 277h1v1h-1zM269 278h2v1h-2zM268 279h1v1h-1zM266 280h2v1h-2zM265 281h1v1h-1zM264 282h1v1h-1zM262 283h2v1h-2zM261 284h1v1h-1zM260 285h1v1h-1zM258 286h2v1h-2zM257 287h1v1h-1zM256 288h1v1h-1zM254 289h2v1h-2zM253 290h1v1h-1zM251 291h2v1h-2zM250 292h1v1h-1zM249 293h1v1h-1zM247 294h2v1h-2zM246 295h1v1h-1zM245 296h1v1h-1zM243 297h2v1h-2zM242 298h1v1h-1zM241 299h1v1h-1zM239 300h2v1h-2zM238 301h1v1h-1zM237 302h1v1h-1zM235 303h2v1h-2zM234 304h1v1h-1zM232 305h2v1h-2zM231 306h1v1h-1zM230 307h1v1h-1zM228 308h2v1h-2zM227 309h1v1h-1zM226 310h1v1h-1zM224 311h2v1h-2zM223 312h1v1h-1zM222 313h1v1h-1zM220 314h2v1h-2zM219 315h1v1h-1zM217 316h2v1h-2zM216 317h1v1h-1zM215 318h1v1h-1zM213 319h2v1h-2zM212 320h1v1h-1zM211 321h1v1h-1zM209 322h2v1h-2zM208 323h1v1h-1zM207 324h1v1h-1zM205 325h2v1h-2zM204 326h1v1h-1zM203 327h1v1h-1zM201 328h2v1h-2zM200 329h1v1h-1z"/>
<path id="asp4-10" fill="#0ff" d="M173 311h3v1h-3zM176 312h4v1h-4zM180 313h5v1h-5zM185 314h5v1h-5zM190 315h4v1h-4zM194 316h5v1h-5zM199 317h5v1h-5zM204 318h4v1h-4zM208 319h5v1h-5zM213 320h4v1h-4zM217 321h5v1h-5zM222 322h5v1h-5zM227 323h4v1h-4zM231 324h5v1h-5zM236 325h4v1h-4zM240 326h5v1h-5zM245 327h5v1h-5zM250 328h4v1h-4zM254 329h5v1h-5zM259 330h5v1h-5zM264 331h4v1h-4zM268 332h3v1h-3z"/>
<path id="asp4-9" fill="#0f0" d="M333 262h2v1h-2zM330 263h3v1h-3zM326 264h4v1h-4zM323 265h3v1h-3zM320 266h3v1h-3zM316 267h4v1h-4zM313 268h3v1h-3zM310 269h3v1h-3zM307 270h3v1h-3zM303 271h4v1h-4zM300 272h3v1h-3zM297 273h3v1h-3zM293 274h4v1h-4zM290 275h3v1h-3zM287 276h3v1h-3zM284 277h3v1h-3zM280 278h4v1h-4zM277 279h3v1h-3zM274 280h3v1h-3zM270 281h4v1h-4zM267 282h3v1h-3zM264 283h3v1h-3zM261 284h3v1h-3zM257 285h4v1h-4zM254 286h3v1h-3zM251 287h3v1h-3zM247 288h4v1h-4zM244 289h3v1h-3zM241 290h3v1h-3zM238 291h3v1h-3zM234 292h4v1h-4zM231 293h3v1h-3zM228 294h3v1h-3zM224 295h4v1h-4zM221 296h3v1h-3zM218 297h3v1h-3zM215 298h3v1h-3zM211 299h4v1h-4zM208 300h3v1h-3zM205 301h3v1h-3zM201 302h4v1h-4zM198 303h3v1h-3zM195 304h3v1h-3zM192 305h3v1h-3zM188 306h4v1h-4zM185 307h3v1h-3zM182 308h3v1h-3zM178 309h4v1h-4zM175 310h3v1h-3zM173 311h2v1h-2z"/>
<path id="asp4-8" fill="#00f" d="M307 170h1v1h-1zM304 173h1v1h-1zM301 176h1v1h-1zM298 179h1v1h-1zM296 182h1v1h-1zM293 185h1v1h-1zM290 188h1v1h-1zM287 191h1v1h-1zM284 194h1v1h-1zM281 197h1v1h-1zM279 200h1v1h-1zM276 203h1v1h-1zM273 206h1v1h-1zM270 209h1v1h-1zM267 212h1v1h-1zM264 215h1v1h-1zM261 218h1v1h-1zM259 221h1v1h-1zM256 224h1v1h-1zM253 227h1v1h-1zM250 230h1v1h-1zM247 233h1v1h-1zM244 236h1v1h-1zM241 239h1v1h-1zM239 242h1v1h-1zM236 245h1v1h-1zM233 248h1v1h-1zM230 251h1v1h-1zM227 254h1v1h-1zM224 257h1v1h-1zM221 260h1v1h-1zM219 263h1v1h-1zM216 266h1v1h-1zM213 269h1v1h-1zM210 272h1v1h-1zM207 275h1v1h-1zM204 278h1v1h-1zM202 281h1v1h-1zM199 284h1v1h-1zM196 287h1v1h-1zM193 290h1v1h-1zM190 293h1v1h-1zM187 296h1v1h-1zM184 299h1v1h-1zM182 302h1v1h-1zM179 305h1v1h-1zM176 308h1v1h-1zM173 311h1v1h-1z"/>
<path id="asp4-4" fill="#ff0" d="M173 311h1v1h-1z"/>
<path id="asp3-3" fill="#ff0" d="M161 298h1v1h-1z"/>
<path id="asp2-5" fill="#0f0" d="M336 229h1v1h-1zM334 230h2v1h-2zM333 231h1v1h-1zM332 232h1v1h-1zM330 233h2v1h-2zM329 234h1v1h-1zM328 235h1v1h-1zM326 236h2v1h-2zM325 237h1v1h-1zM324 238h1v1h-1zM322 239h2v1h-2zM321 240h1v1h-1zM319 241h2v1h-2zM318 242h1v1h-1zM317 243h1v1h-1zM315 244h2v1h-2zM314 245h1v1h-1zM313 246h1v1h-1zM311 247h2v1h-2zM310 248h1v1h-1zM309 249h1v1h-1zM307 250h2v1h-2zM306 251h1v1h-1zM305 252h1v1h-1zM303 253h2v1h-2zM302 254h1v1h-1zM300 255h2v1h-2zM299 256h1v1h-1zM298 257h1v1h-1zM296 258h2v1h-2zM295 259h1v1h-1zM294 260h1v1h-1zM292 261h2v1h-2zM291 262h1v1h-1zM290 263h1v1h-1zM288 264h2v1h-2zM287 265h1v1h-1zM285 266h2v1h-2zM284 267h1v1h-1zM283 268h1v1h-1zM281 269h2v1h-2zM280 270h1v1h-1zM279 271h1v1h-1zM277 272h2v1h-2zM276 273h1v1h-1zM275 274h1v1h-1zM273 275h2v1h-2zM272 276h1v1h-1zM271 277h1v1h-1zM269 278h2v1h-2zM268 279h1v1h-1zM266 280h2v1h-2zM265 281h1v1h-1zM264 282h1v1h-1zM262 283h2v1h-2zM261 284h1v1h-1zM260 285h1v1h-1zM258 286h2v1h-2zM257 287h1v1h-1zM256 288h1v1h-1zM254 289h2v1h-2zM253 290h1v1h-1zM251 291h2v1h-2zM250 292h1v1h-1zM249 293h1v1h-1zM247 294h2v1h-2zM246 295h1v1h-1zM245 296h1v1h-1zM243 297h2v1h-2zM242 298h1v1h-1zM241 299h1v1h-1zM239 300h2v1h-2zM238 301h1v1h-1zM237 302h1v1h-1zM235 303h2v1h-2zM234 304h1v1h-1zM232 305h2v1h-2zM231 306h1v1h-1zM230 307h1v1h-1zM228 308h2v1h-2zM227 309h1v1h-1zM226 310h1v1h-1zM224 311h2v1h-2zM223 312h1v1h-1zM222 313h1v1h-1zM220 314h2v1h-2zM219 315h1v1h-1zM217 316h2v1h-2zM216 317h1v1h-1zM215 318h1v1h-1zM213 319h2v1h-2zM212 320h1v1h-1zM211 321h1v1h-1zM209 322h2v1h-2zM208 323h1v1h-1zM207 324h1v1h-1zM205 325h2v1h-2zM204 326h1v1h-1zM203 327h1v1h-1zM201 328h2v1h-2zM200 329h1v1h-1z"/>
<path id="asp2-2" fill="#ff0" d="M336 229h1v1h-1z"/>
<path id="asp1-1" fill="#ff0" d="M184 320h1v1h-1z"/>
<path id="side-sign1" fill="#f00" d="M627 188h3v1h-3zM626 189h1v2h-1zM630 189h1v2h-1zM624 191h4v1h-4zM629 191h4v1h-4zM624 193h9v1h-9z"/>
<path id="side-sign2" fill="#ff0" d="M624 196h1v1h-1zM626 196h1v1h-1zM628 196h1v1h-1zM625 197h1v7h-1zM627 197h1v7h-1zM629 197h1v7h-1zM632 202h1v2h-1zM630 204h2v1h-2z"/>
<path id="side-sign3" fill="#0f0" d="M630 206h3v1h-3zM631 207h2v1h-2zM630 208h1v1h-1zM632 208h1v1h-1zM625 209h1v1h-1zM629 209h1v1h-1zM626 210h1v1h-1zM628 210h1v1h-1zM627 211h1v1h-1zM626 212h1v1h-1zM628 212h1v1h-1zM625 213h1v1h-1zM629 213h1v1h-1zM624 214h1v1h-1z"/>
<path id="side-sign4" fill="#00f" d="M625 216h1v5h-1zM628 216h1v1h-1zM630 216h2v1h-2zM624 217h1v1h-1zM628 217h2v1h-2zM632 217h1v2h-1zM627 218h1v3h-1zM629 218h1v1h-1zM630 219h2v1h-2zM631 220h1v1h-1zM626 221h1v3h-1zM632 221h1v3h-1zM631 224h1v1h-1z"/>
<path id="side-sign5" fill="#f00" d="M626 226h1v1h-1zM629 226h1v1h-1zM632 226h1v1h-1zM625 227h2v1h-2zM628 227h2v1h-2zM631 227h1v1h-1zM625 228h1v1h-1zM627 228h2v1h-2zM630 228h2v1h-2zM624 229h1v1h-1zM627 229h1v1h-1zM630 229h1v1h-1zM626 231h1v1h-1zM629 231h1v1h-1zM632 231h1v1h-1zM625 232h2v1h-2zM628 232h2v1h-2zM631 232h1v1h-1zM625 233h1v1h-1zM627 233h2v1h-2zM630 233h2v1h-2zM624 234h1v1h-1zM627 234h1v1h-1zM630 234h1v1h-1z"/>
<path id="side-sign6" fill="#ff0" d="M624 236h1v1h-1zM632 236h1v1h-1zM625 237h1v1h-1zM631 237h1v1h-1zM626 238h1v5h-1zM630 238h1v5h-1zM624 240h9v1h-9zM625 243h1v1h-1zM631 243h1v1h-1zM624 244h1v1h-1zM632 244h1v1h-1z"/>
<path id="side-sign7" fill="#0f0" d="M625 246h2v1h-2zM630 246h2v1h-2zM624 247h1v2h-1zM627 247h1v2h-1zM629 247h1v2h-1zM632 247h1v2h-1zM625 249h1v1h-1zM628 249h1v6h-1zM631 249h1v1h-1z"/>
<path id="side-sign8" fill="#00f" d="M625 256h1v1h-1zM631 256h1v1h-1zM626 257h1v1h-1zM630 257h1v1h-1zM627 258h3v1h-3zM626 259h1v1h-1zM630 259h1v1h-1zM625 260h1v3h-1zM631 260h1v3h-1zM626 263h1v1h-1zM630 263h1v1h-1zM627 264h3v1h-3z"/>
<path id="side-sign9" fill="#f00" d="M625 266h1v1h-1zM632 266h1v1h-1zM626 267h6v1h-6zM627 267h1v7h-1zM630 267h1v7h-1zM626 273h6v1h-6zM625 274h1v1h-1zM632 274h1v1h-1z"/>
<path id="side-sign10" fill="#ff0" d="M627 277h3v1h-3zM625 278h2v1h-2zM630 278h2v1h-2zM624 279h1v1h-1zM629 279h1v2h-1zM632 279h1v2h-1zM625 280h2v1h-2zM624 281h1v2h-1zM627 281h1v2h-1zM630 281h2v1h-2zM632 282h1v1h-1zM625 283h2v1h-2zM630 283h2v1h-2zM627 284h3v1h-3z"/>
<path id="side-sign11" fill="#0f0" d="M627 286h3v1h-3zM626 287h1v1h-1zM630 287h1v1h-1zM625 288h1v3h-1zM631 288h1v3h-1zM626 291h1v2h-1zM630 291h1v2h-1zM624 292h1v1h-1zM625 293h1v1h-1zM631 293h1v1h-1zM632 294h1v1h-1z"/>
<path id="side-sign12" fill="#00f" d="M624 296h1v1h-1zM626 296h1v1h-1zM628 296h1v1h-1zM625 297h1v7h-1zM627 297h1v7h-1zM629 297h1v6h-1zM631 297h1v6h-1zM630 298h1v1h-1zM630 303h1v1h-1zM629 304h1v1h-1zM631 304h1v1h-1z"/>
<path id="side-obj1" fill="#f00" d="M627 316h3v1h-3zM625 317h2v1h-2zM630 317h2v1h-2zM625 318h1v1h-1zM631 318h1v1h-1zM624 319h1v3h-1zM632 319h1v3h-1zM628 320h1v1h-1zM625 322h1v1h-1zM631 322h1v1h-1zM625 323h2v1h-2zM630 323h2v1h-2zM627 324h3v1h-3z"/>
<path id="side-obj2" fill="#00f" d="M626 326h3v1h-3zM625 327h1v1h-1zM629 327h2v1h-2zM626 328h1v1h-1zM630 328h1v1h-1zM627 329h1v3h-1zM631 329h1v3h-1zM626 332h1v1h-1zM630 332h1v1h-1zM625 333h1v1h-1zM629 333h2v1h-2zM626 334h3v1h-3z"/>
<path id="side-obj3" fill="#0f0" d="M626 336h1v1h-1zM630 336h1v1h-1zM627 337h3v1h-3zM626 338h1v3h-1zM630 338h1v3h-1zM627 341h3v1h-3zM628 342h1v3h-1zM626 343h5v1h-5z"/>
<path id="side-obj4" fill="#ff0" d="M627 346h3v1h-3zM626 347h1v3h-1zM630 347h1v3h-1zM627 350h3v1h-3zM628 350h1v5h-1zM626 352h5v1h-5z"/>
<path id="side-obj5" fill="#f00" d="M630 356h3v1h-3zM631 357h2v1h-2zM630 358h1v1h-1zM632 358h1v1h-1zM626 359h2v1h-2zM629 359h1v1h-1zM625 360h1v1h-1zM628 360h1v1h-1zM624 361h1v2h-1zM629 361h1v2h-1zM625 363h1v1h-1zM628 363h1v1h-1zM626 364h2v1h-2z"/>
<path id="side-obj6" fill="#f00" d="M631 366h1v1h-1zM625 367h2v1h-2zM630 367h1v8h-1zM627 368h1v2h-1zM626 370h1v2h-1zM625 372h1v1h-1zM625 373h8v1h-8z"/>
<path id="side-obj7" fill="#ff0" d="M627 376h1v8h-1zM625 377h5v1h-5zM629 379h2v1h-2zM628 380h1v1h-1zM631 380h1v2h-1zM630 382h1v2h-1zM631 384h1v1h-1z"/>
<path id="side-obj8" fill="#0f0" d="M625 386h1v1h-1zM631 386h1v1h-1zM626 387h1v4h-1zM630 387h1v4h-1zM628 388h1v5h-1zM626 389h5v1h-5zM625 391h1v1h-1zM631 391h1v1h-1zM627 393h1v1h-1zM629 393h1v1h-1zM628 394h1v1h-1z"/>
<path id="side-obj9" fill="#00f" d="M625 396h1v3h-1zM628 396h1v9h-1zM631 396h1v3h-1zM624 397h1v1h-1zM627 397h3v1h-3zM632 397h1v1h-1zM626 399h1v1h-1zM630 399h1v1h-1zM627 400h3v1h-3zM626 402h5v1h-5z"/>
<path id="side-obj10" fill="#00f" d="M625 406h1v3h-1zM628 406h1v1h-1zM631 406h1v3h-1zM627 407h1v1h-1zM629 407h1v1h-1zM628 408h1v1h-1zM626 409h1v1h-1zM630 409h1v1h-1zM627 410h3v1h-3zM628 410h1v5h-1zM626 412h5v1h-5z"/>
<g class="hn" filter="url(#aa)"><g transform="scale(0.85,1)">
<text x="79.41" y="286" fill="#f00">1</text>
<text x="128.82" y="365" fill="#ff0">2</text>
<text x="228.82" y="415" fill="#0f0">3</text>
<text x="347.65" y="412" fill="#00f">4</text>
<text x="440.59" y="358" fill="#f00">5</text>
<text x="485.29" y="283" fill="#ff0">6</text>
<text x="484.12" y="202" fill="#0f0">7</text>
<text x="434.71" y="123" fill="#00f">8</text>
<text x="334.71" y="73" fill="#f00">9</text>
<text x="211.18 220.59" y="76" fill="#ff0">10</text>
<text x="118.24 127.65" y="130" fill="#0f0">11</text>
<text x="73.53 82.94" y="205" fill="#00f">12</text>
</g></g>
<g class="sb" filter="url(#aa)">
<text x="485.5" y="14" fill="#fff" xml:space="preserve">Astrolog 5.41G</text>
<text x="485.5" y="24" fill="#c0c0c0" xml:space="preserve">Inner ring:</text>
<text x="485.5" y="34" fill="#c0c0c0" xml:space="preserve">Chart of the Moment</text>
<text x="485.5" y="44" fill="#fff" xml:space="preserve">Mon December 1, 2025</text>
<text x="491.5" y="54" fill="#fff" xml:space="preserve">2:35:00am (ST -8:00 GMT)</text>
<text x="485.5" y="64" fill="#c0c0c0" xml:space="preserve">San Francisco, CA</text>
<text x="485.5" y="74" fill="#c0c0c0" xml:space="preserve">122°40'00&quot;W 37°79'00&quot;N</text>
<text x="485.5" y="84" fill="#c0c0c0" xml:space="preserve">Outer ring - Transit:</text>
<text x="485.5" y="94" fill="#ff0" xml:space="preserve">Mon December 1, 2025</text>
<text x="485.5" y="104" fill="#ff0" xml:space="preserve">12:35:12pm (ST +2:00 GMT)</text>
<text x="491.5" y="114" fill="#c0c0c0" xml:space="preserve">26°43'00&quot;E 58°23'00&quot;N</text>
<text x="485.5" y="124" fill="#c0c0c0" xml:space="preserve">Placidus houses.</text>
<text x="485.5" y="134" fill="#c0c0c0" xml:space="preserve">Tropical, Geocentric.</text>
<text x="485.5" y="144" fill="#ff0" xml:space="preserve">Julian Day = 2461010.9411</text>
<text x="485.5" y="154" fill="#c0c0c0" xml:space="preserve">Obliquity = 23°26'09&quot;</text>
<text x="485.5" y="164" fill="#c0c0c0" xml:space="preserve">Sidereal time: 17:04:14</text>
<text x="485.5" y="174" fill="#c0c0c0" xml:space="preserve">DeltaT =  95.1153</text>
<text x="491.5" y="194" fill="#f00" xml:space="preserve">1st house:</text>
<text x="557.5" y="194" fill="#0f0" xml:space="preserve">13Lib29</text>
<text x="491.5" y="204" fill="#ff0" xml:space="preserve">2nd house:</text>
<text x="557.5" y="204" fill="#00f" xml:space="preserve">10Sco51</text>
<text x="491.5" y="214" fill="#0f0" xml:space="preserve">3rd house:</text>
<text x="557.5" y="214" fill="#f00" xml:space="preserve">11Sag52</text>
<text x="491.5" y="224" fill="#00f" xml:space="preserve">4th house:</text>
<text x="557.5" y="224" fill="#ff0" xml:space="preserve">15Cap19</text>
<text x="491.5" y="234" fill="#f00" xml:space="preserve">5th house:</text>
<text x="557.5" y="234" fill="#0f0" xml:space="preserve">18Aqu21</text>
<text x="491.5" y="244" fill="#ff0" xml:space="preserve">6th house:</text>
<text x="557.5" y="244" fill="#00f" xml:space="preserve">18Pis09</text>
<text x="491.5" y="254" fill="#0f0" xml:space="preserve">7th house:</text>
<text x="557.5" y="254" fill="#f00" xml:space="preserve">13Ari29</text>
<text x="491.5" y="264" fill="#00f" xml:space="preserve">8th house:</text>
<text x="557.5" y="264" fill="#ff0" xml:space="preserve">10Tau51</text>
<text x="491.5" y="274" fill="#f00" xml:space="preserve">9th house:</text>
<text x="557.5" y="274" fill="#0f0" xml:space="preserve">11Gem52</text>
<text x="485.5" y="284" fill="#ff0" xml:space="preserve">10th house:</text>
<text x="557.5" y="284" fill="#00f" xml:space="preserve">15Can19</text>
<text x="485.5" y="294" fill="#0f0" xml:space="preserve">11th house:</text>
<text x="557.5" y="294" fill="#f00" xml:space="preserve">18Leo21</text>
<text x="485.5" y="304" fill="#00f" xml:space="preserve">12th house:</text>
<text x="557.5" y="304" fill="#ff0" xml:space="preserve">18Vir09</text>
<text x="491.5" y="324" fill="#f00" xml:space="preserve">Sun:</text>
<text x="527.5" y="324" fill="#f00" xml:space="preserve">9Sag29</text>
<text x="575.5" y="324" fill="#c0c0c0" xml:space="preserve">+ 0°00'</text>
<text x="485.5" y="334" fill="#00f" xml:space="preserve">Moon:</text>
<text x="521.5" y="334" fill="#f00" xml:space="preserve">19Ari50</text>
<text x="575.5" y="334" fill="#c0c0c0" xml:space="preserve">+ 2°55'</text>
<text x="485.5" y="344" fill="#0f0" xml:space="preserve">Merc:</text>
<text x="521.5" y="344" fill="#00f" xml:space="preserve">20Sco57</text>
<text x="575.5" y="344" fill="#c0c0c0" xml:space="preserve">+ 2°37'</text>
<text x="485.5" y="354" fill="#ff0" xml:space="preserve">Venu:</text>
<text x="527.5" y="354" fill="#f00" xml:space="preserve">0Sag45</text>
<text x="575.5" y="354" fill="#c0c0c0" xml:space="preserve">+ 0°41'</text>
<text x="485.5" y="364" fill="#f00" xml:space="preserve">Mars:</text>
<text x="521.5" y="364" fill="#f00" xml:space="preserve">19Sag37</text>
<text x="575.5" y="364" fill="#c0c0c0" xml:space="preserve">- 0°40'</text>
<text x="485.5" y="374" fill="#f00" xml:space="preserve">Jupi:</text>
<text x="521.5" y="374" fill="#00f" xml:space="preserve">24Can30</text>
<text x="563.5" y="374" fill="#fff" xml:space="preserve">R</text>
<text x="575.5" y="374" fill="#c0c0c0" xml:space="preserve">+ 0°10'</text>
<text x="485.5" y="384" fill="#ff0" xml:space="preserve">Satu:</text>
<text x="521.5" y="384" fill="#00f" xml:space="preserve">25Pis10</text>
<text x="575.5" y="384" fill="#c0c0c0" xml:space="preserve">- 2°22'</text>
<text x="485.5" y="394" fill="#0f0" xml:space="preserve">Uran:</text>
<text x="521.5" y="394" fill="#ff0" xml:space="preserve">29Tau02</text>
<text x="563.5" y="394" fill="#fff" xml:space="preserve">R</text>
<text x="575.5" y="394" fill="#c0c0c0" xml:space="preserve">- 0°12'</text>
<text x="485.5" y="404" fill="#00f" xml:space="preserve">Nept:</text>
<text x="521.5" y="404" fill="#00f" xml:space="preserve">29Pis24</text>
<text x="563.5" y="404" fill="#fff" xml:space="preserve">R</text>
<text x="575.5" y="404" fill="#c0c0c0" xml:space="preserve">- 1°21'</text>
<text x="485.5" y="414" fill="#00f" xml:space="preserve">Plut:</text>
<text x="527.5" y="414" fill="#0f0" xml:space="preserve">1Aqu55</text>
<text x="575.5" y="414" fill="#c0c0c0" xml:space="preserve">- 3°46'</text>
<text x="485.5" y="434" fill="#c0c0c0" xml:space="preserve">Fire: 4, Earth: 1,</text>
<text x="485.5" y="444" fill="#c0c0c0" xml:space="preserve">Air : 1, Water: 4</text>
<text x="485.5" y="454" fill="#c0c0c0" xml:space="preserve">Car: 2, Fix: 3, Mut: 5</text>
<text x="485.5" y="464" fill="#c0c0c0" xml:space="preserve">Yang: 5, Yin: 5</text>
<text x="485.5" y="474" fill="#c0c0c0" xml:space="preserve">M: 3, N: 7, A: 5, D: 5</text>
</g>
</svg>
</body></html>
